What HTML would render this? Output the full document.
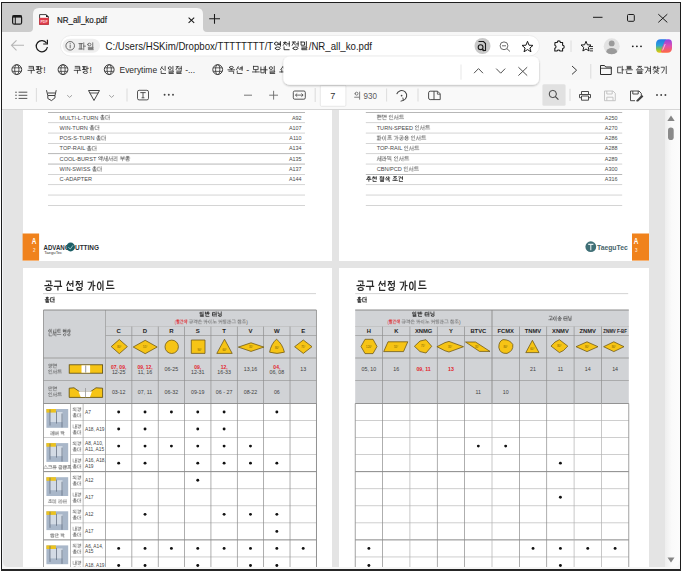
<!DOCTYPE html>
<html><head><meta charset="utf-8"><style>
html,body{margin:0;padding:0;width:684px;height:571px;overflow:hidden;background:#fff;}
svg{display:block;font-family:"Liberation Sans",sans-serif;} text{white-space:pre;}
</style></head><body>
<svg width="684" height="571" viewBox="0 0 684 571">
<rect x="0" y="0" width="684" height="571" fill="#ffffff"/><rect x="2" y="3" width="678" height="29" fill="#cccccc"/><rect x="2" y="32" width="678" height="48" fill="#f7f7f7"/><rect x="2" y="80" width="678" height="29" fill="#f9f9f9"/><rect x="2" y="109" width="678" height="1" fill="#d6d6d6"/><rect x="2" y="110" width="663" height="459" fill="#e4e4e4"/><defs><linearGradient id="sbg" x1="0" y1="0" x2="1" y2="0"><stop offset="0" stop-color="#eeeeee"/><stop offset="0.45" stop-color="#fafafa"/><stop offset="1" stop-color="#fcfcfc"/></linearGradient></defs><rect x="665" y="110" width="15" height="459" fill="url(#sbg)"/><path d="M667.3 121L671 115.4L674.7 121Z" fill="#858585"/><rect x="668" y="127.6" width="5.7" height="12.4" rx="2.8" fill="#8a8a8a"/><path d="M667.5 557.5L671 562.5L674.5 557.5Z" fill="#858585"/><path d="M29 32 Q33 32 33 28 L33 14 Q33 8 39 8 L197 8 Q203 8 203 14 L203 28 Q203 32 207 32 Z" fill="#f7f7f7"/><rect x="12.6" y="15.6" width="9" height="8.6" rx="1.8" fill="none" stroke="#1a1a1a" stroke-width="1.2"/><rect x="12.6" y="15.4" width="9" height="2.2" fill="#1a1a1a"/><rect x="14.8" y="16" width="1" height="8" fill="#1a1a1a"/><path d="M39.6 14.6H46.2L48.4 16.8V24.4H39.6Z" fill="#ffffff" stroke="#2a2a2a" stroke-width="0.9" stroke-linejoin="round"/><rect x="39.2" y="17.8" width="9.6" height="7" fill="#dd3b48"/><path d="M46 14.4V17H48.6Z" fill="#1a1a1a"/><text x="40.4" y="22.6" font-family='"Liberation Sans",sans-serif' font-size="4.2" font-weight="bold" fill="#ffd9dc" textLength="7.2" lengthAdjust="spacingAndGlyphs">PDF</text><text x="57" y="22.7" font-family='"Liberation Sans",sans-serif' font-size="8.9" fill="#1b1b1b" stroke="#1b1b1b" stroke-width="0.18" textLength="50" lengthAdjust="spacingAndGlyphs">NR_all_ko.pdf</text><path d="M188.6 17.6L194.2 22.8M194.2 17.6L188.6 22.8" stroke="#1b1b1b" stroke-width="1.05"/><path d="M214.5 14V23.7M209.2 18.8H220" stroke="#1b1b1b" stroke-width="1.05"/><path d="M593 17.3H602.5" stroke="#1b1b1b" stroke-width="1"/><rect x="627.5" y="14.5" width="6.8" height="6.8" rx="1" fill="none" stroke="#1b1b1b" stroke-width="1"/><path d="M658.3 14.2L667.3 22.4M667.3 14.2L658.3 22.4" stroke="#1b1b1b" stroke-width="1"/><path d="M11.5 45.3H24M16.5 40.3L11.5 45.3L16.5 50.3" fill="none" stroke="#b5b5b5" stroke-width="1.1"/><path d="M46.6 43.2 A5.6 5.6 0 1 0 47.4 47" fill="none" stroke="#1b1b1b" stroke-width="1.2"/><path d="M47.4 39.8V44H43.2" fill="none" stroke="#1b1b1b" stroke-width="1.2"/><rect x="60.5" y="35.5" width="479" height="20.5" rx="10.2" fill="#ffffff" stroke="#e8e8e8" stroke-width="0.8"/><rect x="62.5" y="38.8" width="37.5" height="14" rx="7" fill="#efefef"/><circle cx="70.2" cy="45.8" r="4.3" fill="none" stroke="#5c5c5c" stroke-width="0.9"/><path d="M70.2 44.6V48.2" stroke="#5c5c5c" stroke-width="0.9"/><circle cx="70.2" cy="43.2" r="0.55" fill="#5c5c5c"/><path d="M78.96 43.57L82.39 43.57M79.99 43.57L79.99 48.97M81.36 43.57L81.36 48.97M78.96 48.97L82.39 48.97M83.76 42.90L83.76 49.64M83.76 46.14L85.40 46.14M87.67 44.52a1.64 1.35 0 1 0 3.29 0a1.64 1.35 0 1 0 -3.29 0M92.74 42.90L92.74 46.67M88.35 47.35L93.15 47.35L93.15 48.49L88.35 48.49L88.35 49.64L93.15 49.64" fill="none" stroke="#5a5a5a" stroke-width="0.80" stroke-linecap="square" stroke-linejoin="miter"/><text x="105.50" y="49.50" font-size="10.20" fill="#1b1b1b" textLength="167.73" lengthAdjust="spacingAndGlyphs">C:/Users/HSKim/Dropbox/TTTTTTTT/T</text><text x="308.73" y="49.50" font-size="10.20" fill="#1b1b1b" textLength="63.27" lengthAdjust="spacingAndGlyphs">/NR_all_ko.pdf</text><path d="M274.46 43.64a1.71 1.59 0 1 0 3.43 0a1.71 1.59 0 1 0 -3.43 0M280.42 41.72L280.42 46.18M278.52 43.20L280.42 43.20M278.52 44.53L280.42 44.53M275.17 48.33a2.50 1.35 0 1 0 5.00 0a2.50 1.35 0 1 0 -5.00 0M285.05 41.88L285.05 42.43M283.51 42.74L286.59 42.74M285.05 42.74L283.33 45.23M285.05 43.80L286.76 45.23M289.29 41.72L289.29 46.18M287.40 43.87L289.29 43.87M284.05 46.98L284.05 49.69L289.04 49.69M292.38 42.04L295.46 42.04M293.92 42.04L292.21 45.23M293.92 43.32L295.63 45.23M298.17 41.72L298.17 46.18M296.27 43.87L298.17 43.87M292.92 48.33a2.50 1.35 0 1 0 5.00 0a2.50 1.35 0 1 0 -5.00 0M301.08 42.04L304.51 42.04L304.51 45.23L301.08 45.23L301.08 42.04M306.36 41.72L306.36 46.18M301.80 46.98L306.79 46.98L306.79 48.33L301.80 48.33L301.80 49.69L306.79 49.69" fill="none" stroke="#1b1b1b" stroke-width="0.85" stroke-linecap="square" stroke-linejoin="miter"/><circle cx="482.5" cy="46" r="8" fill="#c9c9c9"/><path d="M478.5 41.5h5l2 2v7h-3" fill="none" stroke="#1b1b1b" stroke-width="1.1"/><circle cx="480.6" cy="47.2" r="2.4" fill="none" stroke="#1b1b1b" stroke-width="1.1"/><path d="M482.3 49L484.3 51" stroke="#1b1b1b" stroke-width="1.1"/><circle cx="504" cy="45.8" r="3.9" fill="none" stroke="#6a6a6a" stroke-width="1"/><path d="M506.8 48.6L510 51.5M502 45.8H506" stroke="#6a6a6a" stroke-width="1"/><path d="M527.5 41.3L529 45.2L533 45.4L529.9 48L531 51.8L527.5 49.6L524 51.8L525.1 48L522 45.4L526 45.2Z" fill="none" stroke="#1b1b1b" stroke-width="1" stroke-linejoin="round"/><path d="M555 42.5h2.2a1.6 1.6 0 0 1 3.2 0h2.2v2.8a1.6 1.6 0 0 1 0 3.2v2.5h-2.6a1.6 1.6 0 0 0 -3 0h-2.2v-2.6a1.6 1.6 0 0 0 0 -3.1z" fill="none" stroke="#1b1b1b" stroke-width="1.1" stroke-linejoin="round"/><path d="M571 40.5V52" stroke="#d8d8d8" stroke-width="0.9"/><path d="M586 41.3L587.4 44.8L591 45L588.3 47.4L589.1 51L586 49L582.9 51L583.7 47.4L581 45L584.6 44.8Z" fill="none" stroke="#1b1b1b" stroke-width="1" stroke-linejoin="round"/><path d="M589 46.5H593M589.8 48.7H593M590 50.9H593" stroke="#1b1b1b" stroke-width="0.9"/><defs><clipPath id="avc"><circle cx="611.7" cy="46.3" r="8"/></clipPath></defs><circle cx="611.7" cy="46.3" r="8" fill="#e2e2e2"/><g clip-path="url(#avc)"><circle cx="611.7" cy="43.4" r="2.9" fill="#9a9a9a"/><ellipse cx="611.7" cy="52.6" rx="5.6" ry="4.6" fill="#9a9a9a"/></g><circle cx="632.8" cy="46.3" r="0.9" fill="#1b1b1b"/><circle cx="636.9" cy="46.3" r="0.9" fill="#1b1b1b"/><circle cx="641" cy="46.3" r="0.9" fill="#1b1b1b"/><defs><linearGradient id="cp1" x1="0" y1="0" x2="0" y2="1"><stop offset="0" stop-color="#2476e8"/><stop offset="0.45" stop-color="#2aa0d8"/><stop offset="0.75" stop-color="#8cc63e"/><stop offset="1" stop-color="#f2c40f"/></linearGradient><linearGradient id="cp2" x1="0" y1="0" x2="0" y2="1"><stop offset="0" stop-color="#8a43e6"/><stop offset="0.5" stop-color="#e04fb0"/><stop offset="1" stop-color="#ff6a3d"/></linearGradient></defs><path d="M660.8 39.2H665.6Q667.6 39.2 667 41L663.3 50.8Q662.5 52.8 660.4 52.8H659.6Q656 52.8 656 48.6V44Q656 39.2 660.8 39.2Z" fill="url(#cp1)"/><path d="M667.2 52.8H662.4Q660.4 52.8 661 51L664.7 41.2Q665.5 39.2 667.6 39.2H668.4Q672 39.2 672 43.4V48Q672 52.8 667.2 52.8Z" fill="url(#cp2)"/><path d="M665.2 44L662.6 50.4" stroke="#fbfbfb" stroke-width="0.8" opacity="0.8"/><circle cx="16.8" cy="69.6" r="4.9" fill="none" stroke="#3a3a3a" stroke-width="1"/><ellipse cx="16.8" cy="69.6" rx="2.1" ry="4.9" fill="none" stroke="#3a3a3a" stroke-width="0.9"/><path d="M12.3 67.8H21.3M12.3 71.4H21.3" stroke="#3a3a3a" stroke-width="0.8"/><text x="43.20" y="73.40" font-size="8.50" fill="#2a2a2a" textLength="2.40" lengthAdjust="spacingAndGlyphs">!</text><path d="M29.05 66.40L33.50 66.40L33.50 69.60M29.05 68.00L33.50 68.00M28.10 70.38L34.45 70.38M31.27 70.38L31.27 73.12M36.36 66.68L39.42 66.68M37.28 66.68L37.28 69.53M38.50 66.68L38.50 69.53M36.36 69.53L39.42 69.53M40.71 66.40L40.71 70.38M40.71 68.31L42.15 68.31M37.00 72.30a2.22 1.21 0 1 0 4.45 0a2.22 1.21 0 1 0 -4.45 0" fill="none" stroke="#2a2a2a" stroke-width="0.80" stroke-linecap="square" stroke-linejoin="miter"/><circle cx="63.0" cy="69.6" r="4.9" fill="none" stroke="#3a3a3a" stroke-width="1"/><ellipse cx="63.0" cy="69.6" rx="2.1" ry="4.9" fill="none" stroke="#3a3a3a" stroke-width="0.9"/><path d="M58.5 67.8H67.5M58.5 71.4H67.5" stroke="#3a3a3a" stroke-width="0.8"/><text x="89.40" y="73.40" font-size="8.50" fill="#2a2a2a" textLength="2.40" lengthAdjust="spacingAndGlyphs">!</text><path d="M75.25 66.40L79.70 66.40L79.70 69.60M75.25 68.00L79.70 68.00M74.30 70.38L80.65 70.38M77.47 70.38L77.47 73.12M82.56 66.68L85.62 66.68M83.48 66.68L83.48 69.53M84.70 66.68L84.70 69.53M82.56 69.53L85.62 69.53M86.91 66.40L86.91 70.38M86.91 68.31L88.35 68.31M83.20 72.30a2.22 1.21 0 1 0 4.45 0a2.22 1.21 0 1 0 -4.45 0" fill="none" stroke="#2a2a2a" stroke-width="0.80" stroke-linecap="square" stroke-linejoin="miter"/><circle cx="109.2" cy="69.6" r="4.9" fill="none" stroke="#3a3a3a" stroke-width="1"/><ellipse cx="109.2" cy="69.6" rx="2.1" ry="4.9" fill="none" stroke="#3a3a3a" stroke-width="0.9"/><path d="M104.7 67.8H113.7M104.7 71.4H113.7" stroke="#3a3a3a" stroke-width="0.8"/><text x="119.50" y="73.40" font-size="8.50" fill="#2a2a2a" textLength="39.94" lengthAdjust="spacingAndGlyphs">Everytime </text><text x="182.79" y="73.40" font-size="8.50" fill="#2a2a2a" textLength="12.21" lengthAdjust="spacingAndGlyphs"> -...</text><path d="M162.03 66.68L160.54 69.53M162.03 67.68L163.52 69.53M165.13 66.40L165.13 70.38M161.16 71.09L161.16 73.51L165.51 73.51M168.32 68.11a1.49 1.42 0 1 0 2.98 0a1.49 1.42 0 1 0 -2.98 0M172.91 66.40L172.91 70.38M168.94 71.09L173.29 71.09L173.29 72.30L168.94 72.30L168.94 73.51L173.29 73.51M176.25 66.68L178.93 66.68M177.59 66.68L176.10 69.53M177.59 67.82L179.08 69.53M181.28 66.40L181.28 70.38M179.63 68.31L181.28 68.31M176.72 71.09L181.07 71.09L181.07 72.30L176.72 72.30L176.72 73.51L181.07 73.51" fill="none" stroke="#2a2a2a" stroke-width="0.80" stroke-linecap="square" stroke-linejoin="miter"/><circle cx="217.7" cy="69.6" r="4.9" fill="none" stroke="#3a3a3a" stroke-width="1"/><ellipse cx="217.7" cy="69.6" rx="2.1" ry="4.9" fill="none" stroke="#3a3a3a" stroke-width="0.9"/><path d="M213.2 67.8H222.2M213.2 71.4H222.2" stroke="#3a3a3a" stroke-width="0.8"/><text x="243.71" y="73.40" font-size="8.50" fill="#2a2a2a" textLength="7.97" lengthAdjust="spacingAndGlyphs"> - </text><text x="276.45" y="73.40" font-size="8.50" fill="#2a2a2a" textLength="2.49" lengthAdjust="spacingAndGlyphs"> </text><path d="M229.34 67.47a1.99 1.07 0 1 0 3.98 0a1.99 1.07 0 1 0 -3.98 0M231.33 68.75L231.33 69.81M228.01 69.81L234.64 69.81M229.01 71.23L233.65 71.23L233.65 73.51M238.19 66.68L236.60 69.53M238.19 67.68L239.78 69.53M242.14 66.40L242.14 70.38M240.37 67.71L242.14 67.71M240.37 68.91L242.14 68.91M237.26 71.09L237.26 73.51L241.90 73.51M253.49 66.40L258.13 66.40L258.13 69.60L253.49 69.60L253.49 66.40M255.81 69.99L255.81 71.95M252.50 71.95L259.13 71.95M260.89 67.11L260.89 72.80L264.20 72.80L264.20 67.11M260.89 69.67L264.20 69.67M265.53 66.40L265.53 73.51M265.53 69.81L267.12 69.81M269.34 68.11a1.59 1.42 0 1 0 3.18 0a1.59 1.42 0 1 0 -3.18 0M274.25 66.40L274.25 70.38M270.00 71.09L274.64 71.09L274.64 72.30L270.00 72.30L270.00 73.51L274.64 73.51M283.07 66.40L280.75 69.60M283.07 67.52L285.39 69.60M281.75 69.99L281.75 71.95M284.40 69.99L284.40 71.95M279.76 71.95L286.39 71.95" fill="none" stroke="#2a2a2a" stroke-width="0.80" stroke-linecap="square" stroke-linejoin="miter"/><path d="M572 66L576.6 70.2L572 74.4" fill="none" stroke="#3a3a3a" stroke-width="1"/><path d="M590.8 64V78.6" stroke="#d8d8d8" stroke-width="0.9"/><path d="M600.5 65.5h4l1.2 1.5h5.6v7.5h-10.8z" fill="none" stroke="#2b2b2b" stroke-width="1"/><path d="M600.5 68.3h10.8" stroke="#2b2b2b" stroke-width="0.8"/><text x="633.14" y="73.40" font-size="8.50" fill="#2a2a2a" textLength="2.48" lengthAdjust="spacingAndGlyphs"> </text><path d="M620.94 67.11L617.64 67.11L617.64 72.80L620.94 72.80M622.26 66.40L622.26 73.51M622.26 69.81L623.84 69.81M627.05 66.40L631.01 66.40L631.01 67.47L627.05 67.47L627.05 68.53L631.01 68.53M625.73 69.81L632.33 69.81M626.72 71.23L626.72 73.51L631.34 73.51M637.95 66.40L641.51 66.40M639.73 66.40L637.75 68.53M639.73 67.25L641.71 68.53M636.43 69.81L643.03 69.81M637.42 71.23L642.04 71.23L642.04 72.37L637.42 72.37L637.42 73.51L642.04 73.51M644.78 67.22L647.92 67.22L647.59 69.96L645.61 72.80M650.46 66.40L650.46 73.51M648.61 68.75L650.46 68.75M648.61 70.88L650.46 70.88M654.79 66.54L654.79 67.03M653.36 67.31L656.21 67.31M654.79 67.31L653.20 69.53M654.79 68.25L656.37 69.53M657.71 66.40L657.71 70.38M657.71 68.31L659.21 68.31M654.09 71.09L658.25 71.09M656.17 71.09L653.86 73.51M656.17 72.06L658.48 73.51M661.22 67.22L664.36 67.22L664.03 69.96L662.05 72.80M666.24 66.40L666.24 73.51" fill="none" stroke="#2a2a2a" stroke-width="0.80" stroke-linecap="square" stroke-linejoin="miter"/><path d="M18.6 92.2H27.3M18.6 95.3H27.3M18.6 98.4H27.3" stroke="#424242" stroke-width="0.9"/><circle cx="16" cy="92.2" r="0.7" fill="#424242"/><circle cx="16" cy="95.3" r="0.7" fill="#424242"/><circle cx="16" cy="98.4" r="0.7" fill="#424242"/><path d="M36.4 88V101.8" stroke="#d4d4d4" stroke-width="0.8"/><path d="M46.5 90.2L47.8 95.5H55L56.2 90.2M47.8 95.5V98.5L51.5 100.6L55 97.8V95.5M47.8 93H55" fill="none" stroke="#424242" stroke-width="1"/><path d="M67.2 95.2L69.6 97.4L72 95.2" fill="none" stroke="#9a9a9a" stroke-width="0.9"/><path d="M88.5 90.5H99.5L94 100.5Z" fill="none" stroke="#424242" stroke-width="1" stroke-linejoin="round"/><path d="M89.8 93H98.2" stroke="#424242" stroke-width="0.9"/><path d="M109.2 95.2L111.6 97.4L114 95.2" fill="none" stroke="#9a9a9a" stroke-width="0.9"/><path d="M127 88.5V101.5" stroke="#d4d4d4" stroke-width="0.8"/><rect x="137.5" y="90.3" width="11" height="9.6" rx="1.6" fill="none" stroke="#424242" stroke-width="0.9"/><path d="M140.3 92.6H145.7M143 92.6V97.8M141.6 97.8H144.4" stroke="#424242" stroke-width="0.9"/><circle cx="164.6" cy="94.8" r="0.95" fill="#424242"/><circle cx="168.8" cy="94.8" r="0.95" fill="#424242"/><circle cx="173" cy="94.8" r="0.95" fill="#424242"/><path d="M244 95.2H252" stroke="#6a6a6a" stroke-width="0.9"/><path d="M269.2 95.2H278M273.6 90.8V99.6" stroke="#6a6a6a" stroke-width="0.9"/><rect x="293.3" y="91" width="12" height="8.2" rx="1.4" fill="none" stroke="#424242" stroke-width="0.9"/><path d="M295.5 95.1H303.1M297.2 93.5L295.5 95.1L297.2 96.7M301.4 93.5L303.1 95.1L301.4 96.7" fill="none" stroke="#424242" stroke-width="0.8"/><path d="M315.2 88V102" stroke="#d4d4d4" stroke-width="0.8"/><rect x="320.3" y="85.3" width="25.6" height="21" rx="1.2" fill="#ffffff" stroke="#e2e2e2" stroke-width="0.8"/><text x="332.8" y="99" font-family='"Liberation Sans",sans-serif' font-size="9.2" fill="#333" text-anchor="middle">7</text><text x="361.38" y="99.00" font-size="9.20" fill="#5a5a5a" textLength="15.62" lengthAdjust="spacingAndGlyphs"> 930</text><path d="M355.04 93.65a1.47 1.47 0 1 0 2.95 0a1.47 1.47 0 1 0 -2.95 0M354.74 97.22L358.87 97.22M359.61 92.17L359.61 99.18" fill="none" stroke="#5a5a5a" stroke-width="0.75" stroke-linecap="square" stroke-linejoin="miter"/><path d="M386.6 88.5V101.5" stroke="#d4d4d4" stroke-width="0.8"/><path d="M396.7 94.2A5.1 5.1 0 1 1 403.2 100.4" fill="none" stroke="#424242" stroke-width="1.05"/><path d="M400.6 101.2L403.4 100.4L402.8 97.6" fill="none" stroke="#424242" stroke-width="0.95"/><circle cx="401.6" cy="95.6" r="0.85" fill="#424242"/><path d="M418 88.5V101.5" stroke="#d4d4d4" stroke-width="0.8"/><path d="M434 91.2H430.2Q428.6 91.2 428.6 92.8V98Q428.6 99.6 430.2 99.6H434Z M434 91.2H437.6L440.2 93.8V99.6H434" fill="none" stroke="#424242" stroke-width="0.95" stroke-linejoin="round"/><path d="M437.4 91.4V94.2H440" fill="none" stroke="#424242" stroke-width="0.8"/><rect x="542.4" y="84.3" width="23.2" height="21.4" rx="1.5" fill="#e1e1e1"/><circle cx="552.8" cy="94" r="3.6" fill="none" stroke="#424242" stroke-width="1"/><path d="M555.4 96.6L558.4 99.6" stroke="#424242" stroke-width="1.1"/><path d="M570 88.8V101" stroke="#d4d4d4" stroke-width="0.8"/><path d="M581.5 94.5V91.5H588.5V94.5M579.5 97.7V94.5H590.5V97.7H588.5M581.5 97.7H579.5M581.5 96V100.2H588.5V96Z" fill="none" stroke="#424242" stroke-width="0.95"/><path d="M604.5 91h8.5l2.3 2.3v7.4h-10.8z M606.8 91v3h5.4v-3 M606.8 100.7v-3.5h6.2v3.5" fill="none" stroke="#c2c2c2" stroke-width="0.95"/><path d="M630.5 91h8.5l2.3 2.3v2.4 M630.5 91v9.7h4.5 M632.8 91v3h5.4v-3" fill="none" stroke="#424242" stroke-width="0.95"/><path d="M636.5 100.2L641.8 94.8L643.4 96.4L638.1 101.6H636.5Z" fill="#424242"/><circle cx="657" cy="95" r="0.95" fill="#424242"/><circle cx="661.2" cy="95" r="0.95" fill="#424242"/><circle cx="665.4" cy="95" r="0.95" fill="#424242"/><g clip-path="url(#pdfclip)"><defs><clipPath id="pdfclip"><rect x="2" y="110" width="663" height="459"/></clipPath></defs><rect x="23" y="110" width="309" height="151" fill="#fff"/><rect x="339" y="110" width="310" height="151" fill="#fff"/><rect x="23" y="268" width="309" height="301" fill="#fff"/><rect x="339" y="268" width="310" height="301" fill="#fff"/><rect x="48" y="112.05" width="257" height="0.7" fill="#999999"/><rect x="365.8" y="112.05" width="256.4" height="0.7" fill="#999999"/><rect x="48" y="122.38" width="257" height="0.7" fill="#c2c2c2"/><rect x="365.8" y="122.38" width="256.4" height="0.7" fill="#c2c2c2"/><rect x="48" y="132.71" width="257" height="0.7" fill="#c2c2c2"/><rect x="365.8" y="132.71" width="256.4" height="0.7" fill="#c2c2c2"/><rect x="48" y="143.04" width="257" height="0.7" fill="#c2c2c2"/><rect x="365.8" y="143.04" width="256.4" height="0.7" fill="#c2c2c2"/><rect x="48" y="153.37" width="257" height="0.7" fill="#999999"/><rect x="365.8" y="153.37" width="256.4" height="0.7" fill="#c2c2c2"/><rect x="48" y="163.70" width="257" height="0.7" fill="#999999"/><rect x="365.8" y="163.70" width="256.4" height="0.7" fill="#c2c2c2"/><rect x="48" y="174.03" width="257" height="0.7" fill="#c2c2c2"/><rect x="365.8" y="174.03" width="256.4" height="0.7" fill="#999999"/><rect x="48" y="184.36" width="257" height="0.7" fill="#c2c2c2"/><rect x="365.8" y="184.36" width="256.4" height="0.7" fill="#c2c2c2"/><rect x="48" y="194.69" width="257" height="0.7" fill="#c2c2c2"/><rect x="365.8" y="194.69" width="256.4" height="0.7" fill="#c2c2c2"/><rect x="48" y="205.02" width="257" height="0.7" fill="#c2c2c2"/><rect x="365.8" y="205.02" width="256.4" height="0.7" fill="#c2c2c2"/><text x="59.60" y="119.50" font-size="5.60" fill="#4a4a4a" textLength="40.34" lengthAdjust="spacingAndGlyphs">MULTI-L-TURN </text><path d="M102.51 115.06L102.51 115.29M101.38 115.46L103.64 115.46M101.71 116.04a0.80 0.43 0 1 0 1.61 0a0.80 0.43 0 1 0 -1.61 0M102.51 116.61L102.51 117.28M100.42 117.28L104.61 117.28M101.05 118.18L103.98 118.18L103.98 118.89L101.05 118.89L101.05 119.61L103.98 119.61M107.75 115.57L105.66 115.57L105.66 119.16L107.75 119.16M109.26 115.12L109.26 119.61M108.08 117.28L109.26 117.28" fill="none" stroke="#4a4a4a" stroke-width="0.45" stroke-linecap="square" stroke-linejoin="miter"/><text x="301.5" y="119.50" font-family='"Liberation Sans",sans-serif' font-size="5.4" fill="#4a4a4a" text-anchor="end">A92</text><text x="59.60" y="129.83" font-size="5.60" fill="#4a4a4a" textLength="29.86" lengthAdjust="spacingAndGlyphs">WIN-TURN </text><path d="M92.04 125.39L92.04 125.62M90.91 125.79L93.17 125.79M91.23 126.37a0.80 0.43 0 1 0 1.61 0a0.80 0.43 0 1 0 -1.61 0M92.04 126.94L92.04 127.61M89.94 127.61L94.13 127.61M90.57 128.51L93.50 128.51L93.50 129.22L90.57 129.22L90.57 129.94L93.50 129.94M97.27 125.90L95.18 125.90L95.18 129.49L97.27 129.49M98.78 125.46L98.78 129.94M97.61 127.61L98.78 127.61" fill="none" stroke="#4a4a4a" stroke-width="0.45" stroke-linecap="square" stroke-linejoin="miter"/><text x="301.5" y="129.83" font-family='"Liberation Sans",sans-serif' font-size="5.4" fill="#4a4a4a" text-anchor="end">A107</text><text x="59.60" y="140.16" font-size="5.60" fill="#4a4a4a" textLength="36.40" lengthAdjust="spacingAndGlyphs">POS-S-TURN </text><path d="M98.58 135.72L98.58 135.95M97.45 136.12L99.71 136.12M97.77 136.70a0.80 0.43 0 1 0 1.61 0a0.80 0.43 0 1 0 -1.61 0M98.58 137.27L98.58 137.94M96.48 137.94L100.67 137.94M97.11 138.84L100.04 138.84L100.04 139.55L97.11 139.55L97.11 140.27L100.04 140.27M103.81 136.23L101.72 136.23L101.72 139.82L103.81 139.82M105.32 135.78L105.32 140.27M104.15 137.94L105.32 137.94" fill="none" stroke="#4a4a4a" stroke-width="0.45" stroke-linecap="square" stroke-linejoin="miter"/><text x="301.5" y="140.16" font-family='"Liberation Sans",sans-serif' font-size="5.4" fill="#4a4a4a" text-anchor="end">A110</text><text x="59.60" y="150.49" font-size="5.60" fill="#4a4a4a" textLength="27.07" lengthAdjust="spacingAndGlyphs">TOP-RAIL </text><path d="M89.25 146.05L89.25 146.28M88.12 146.45L90.38 146.45M88.45 147.03a0.80 0.43 0 1 0 1.61 0a0.80 0.43 0 1 0 -1.61 0M89.25 147.60L89.25 148.27M87.16 148.27L91.34 148.27M87.78 149.17L90.71 149.17L90.71 149.88L87.78 149.88L87.78 150.60L90.71 150.60M94.48 146.56L92.39 146.56L92.39 150.15L94.48 150.15M95.99 146.12L95.99 150.60M94.82 148.27L95.99 148.27" fill="none" stroke="#4a4a4a" stroke-width="0.45" stroke-linecap="square" stroke-linejoin="miter"/><text x="301.5" y="150.49" font-family='"Liberation Sans",sans-serif' font-size="5.4" fill="#4a4a4a" text-anchor="end">A134</text><text x="59.60" y="160.82" font-size="5.60" fill="#4a4a4a" textLength="38.17" lengthAdjust="spacingAndGlyphs">COOL-BURST </text><text x="118.38" y="160.82" font-size="5.60" fill="#4a4a4a" textLength="1.56" lengthAdjust="spacingAndGlyphs"> </text><path d="M98.46 157.52a1.00 0.90 0 1 0 2.01 0a1.00 0.90 0 1 0 -2.01 0M101.24 156.44L101.24 158.96M102.20 156.44L102.20 158.96M101.24 157.65L102.20 157.65M98.88 159.41L101.81 159.41L101.81 160.93M104.53 156.89L103.49 160.48M104.53 158.15L105.58 160.48M106.59 156.44L106.59 160.93M107.42 156.44L107.42 160.93M105.83 158.60L106.59 158.60M109.69 156.89L108.64 160.48M109.69 158.15L110.73 160.48M112.24 156.44L112.24 160.93M111.07 158.60L112.24 158.60M113.79 156.89L115.89 156.89L115.89 158.69L113.79 158.69L113.79 160.48L115.89 160.48M116.97 156.44L116.97 160.93M121.04 156.44L121.04 158.46L123.97 158.46L123.97 156.44M121.04 157.35L123.97 157.35M120.42 158.96L124.60 158.96M122.51 158.96L122.51 160.68M126.41 156.44L128.92 156.44M127.16 156.44L127.16 157.79M128.16 156.44L128.16 157.79M126.41 157.79L128.92 157.79M125.57 158.06L129.75 158.06M127.66 158.06L127.66 159.00M126.20 159.50L129.13 159.50L129.13 160.93L126.20 160.93L126.20 159.50" fill="none" stroke="#4a4a4a" stroke-width="0.45" stroke-linecap="square" stroke-linejoin="miter"/><text x="301.5" y="160.82" font-family='"Liberation Sans",sans-serif' font-size="5.4" fill="#4a4a4a" text-anchor="end">A135</text><text x="59.60" y="171.15" font-size="5.60" fill="#4a4a4a" textLength="32.35" lengthAdjust="spacingAndGlyphs">WIN-SWISS </text><path d="M94.53 166.71L94.53 166.94M93.40 167.11L95.66 167.11M93.73 167.69a0.80 0.43 0 1 0 1.61 0a0.80 0.43 0 1 0 -1.61 0M94.53 168.26L94.53 168.93M92.44 168.93L96.62 168.93M93.06 169.83L95.99 169.83L95.99 170.54L93.06 170.54L93.06 171.26L95.99 171.26M99.76 167.22L97.67 167.22L97.67 170.81L99.76 170.81M101.27 166.78L101.27 171.26M100.10 168.93L101.27 168.93" fill="none" stroke="#4a4a4a" stroke-width="0.45" stroke-linecap="square" stroke-linejoin="miter"/><text x="301.5" y="171.15" font-family='"Liberation Sans",sans-serif' font-size="5.4" fill="#4a4a4a" text-anchor="end">A137</text><text x="59.60" y="181.48" font-size="5.60" fill="#4a4a4a" textLength="32.36" lengthAdjust="spacingAndGlyphs">C-ADAPTER</text><text x="301.5" y="181.48" font-family='"Liberation Sans",sans-serif' font-size="5.4" fill="#4a4a4a" text-anchor="end">A144</text><text x="387.00" y="119.50" font-size="5.60" fill="#4a4a4a" textLength="1.56" lengthAdjust="spacingAndGlyphs"> </text><path d="M377.39 115.30L379.40 115.30M377.99 115.30L377.99 117.10M378.80 115.30L378.80 117.10M377.39 117.10L379.40 117.10M380.89 115.12L380.89 117.64M379.77 115.95L380.89 115.95M379.77 116.71L380.89 116.71M377.81 118.09L377.81 119.61L380.74 119.61M382.54 115.30L384.55 115.30L384.55 117.10L382.54 117.10L382.54 115.30M386.04 115.12L386.04 117.64M384.93 115.95L386.04 115.95M384.93 116.71L386.04 116.71M382.96 118.09L382.96 119.61L385.89 119.61M389.25 116.20a1.00 0.90 0 1 0 2.01 0a1.00 0.90 0 1 0 -2.01 0M392.35 115.12L392.35 117.64M389.67 118.09L389.67 119.61L392.60 119.61M395.32 115.57L394.28 119.16M395.32 116.83L396.37 119.16M397.88 115.12L397.88 119.61M396.71 117.28L397.88 117.28M402.91 115.12L399.97 115.12L399.97 117.14L402.91 117.14M399.97 116.13L402.91 116.13M399.35 118.62L403.53 118.62" fill="none" stroke="#4a4a4a" stroke-width="0.45" stroke-linecap="square" stroke-linejoin="miter"/><text x="617.4" y="119.50" font-family='"Liberation Sans",sans-serif' font-size="5.4" fill="#4a4a4a" text-anchor="end">A250</text><text x="376.70" y="129.83" font-size="5.60" fill="#4a4a4a" textLength="37.96" lengthAdjust="spacingAndGlyphs">TURN-SPEED </text><path d="M415.35 126.53a1.00 0.90 0 1 0 2.01 0a1.00 0.90 0 1 0 -2.01 0M418.45 125.46L418.45 127.97M415.77 128.42L415.77 129.94L418.70 129.94M421.42 125.90L420.38 129.49M421.42 127.16L422.47 129.49M423.98 125.46L423.98 129.94M422.81 127.61L423.98 127.61M429.00 125.46L426.07 125.46L426.07 127.47L429.00 127.47M426.07 126.46L429.00 126.46M425.45 128.95L429.63 128.95" fill="none" stroke="#4a4a4a" stroke-width="0.45" stroke-linecap="square" stroke-linejoin="miter"/><text x="617.4" y="129.83" font-family='"Liberation Sans",sans-serif' font-size="5.4" fill="#4a4a4a" text-anchor="end">A270</text><text x="392.16" y="140.16" font-size="5.60" fill="#4a4a4a" textLength="1.56" lengthAdjust="spacingAndGlyphs"> </text><text x="409.17" y="140.16" font-size="5.60" fill="#4a4a4a" textLength="1.56" lengthAdjust="spacingAndGlyphs"> </text><path d="M377.27 136.23L379.36 136.23M377.89 136.23L377.89 139.82M378.73 136.23L378.73 139.82M377.27 139.82L379.36 139.82M380.20 135.78L380.20 140.27M380.20 137.94L381.20 137.94M382.42 138.03a1.05 1.79 0 1 0 2.09 0a1.05 1.79 0 1 0 -2.09 0M385.60 135.78L385.60 140.27M388.11 135.78L391.05 135.78M388.99 135.78L388.99 137.80M390.17 135.78L390.17 137.80M388.11 137.80L391.05 137.80M387.49 139.28L391.67 139.28M394.28 136.31L396.27 136.31L396.06 138.03L394.80 139.82M397.21 135.78L397.21 140.27M397.21 137.94L398.21 137.94M400.18 135.78L402.70 135.78L402.70 137.13M401.44 137.27L401.44 137.94M399.35 137.94L403.53 137.94M399.97 139.55a1.47 0.72 0 1 0 2.93 0a1.47 0.72 0 1 0 -2.93 0M405.34 136.46a1.26 0.67 0 1 0 2.51 0a1.26 0.67 0 1 0 -2.51 0M405.75 137.27L405.75 137.94M407.43 137.27L407.43 137.94M404.50 137.94L408.69 137.94M405.13 139.55a1.47 0.72 0 1 0 2.93 0a1.47 0.72 0 1 0 -2.93 0M411.42 136.86a1.00 0.90 0 1 0 2.01 0a1.00 0.90 0 1 0 -2.01 0M414.51 135.78L414.51 138.30M411.83 138.75L411.83 140.27L414.77 140.27M417.49 136.23L416.44 139.82M417.49 137.49L418.54 139.82M420.04 135.78L420.04 140.27M418.87 137.94L420.04 137.94M425.07 135.78L422.14 135.78L422.14 137.80L425.07 137.80M422.14 136.79L425.07 136.79M421.51 139.28L425.70 139.28" fill="none" stroke="#4a4a4a" stroke-width="0.45" stroke-linecap="square" stroke-linejoin="miter"/><text x="617.4" y="140.16" font-family='"Liberation Sans",sans-serif' font-size="5.4" fill="#4a4a4a" text-anchor="end">A286</text><text x="376.70" y="150.49" font-size="5.60" fill="#4a4a4a" textLength="27.07" lengthAdjust="spacingAndGlyphs">TOP-RAIL </text><path d="M404.47 147.19a1.00 0.90 0 1 0 2.01 0a1.00 0.90 0 1 0 -2.01 0M407.56 146.12L407.56 148.63M404.88 149.08L404.88 150.60L407.81 150.60M410.54 146.56L409.49 150.15M410.54 147.82L411.58 150.15M413.09 146.12L413.09 150.60M411.92 148.27L413.09 148.27M418.12 146.12L415.19 146.12L415.19 148.13L418.12 148.13M415.19 147.12L418.12 147.12M414.56 149.61L418.75 149.61" fill="none" stroke="#4a4a4a" stroke-width="0.45" stroke-linecap="square" stroke-linejoin="miter"/><text x="617.4" y="150.49" font-family='"Liberation Sans",sans-serif' font-size="5.4" fill="#4a4a4a" text-anchor="end">A288</text><text x="392.16" y="160.82" font-size="5.60" fill="#4a4a4a" textLength="1.56" lengthAdjust="spacingAndGlyphs"> </text><path d="M378.31 156.89L377.27 160.48M378.31 158.15L379.36 160.48M380.36 156.44L380.36 160.93M381.20 156.44L381.20 160.93M379.61 158.60L380.36 158.60M382.42 156.89L384.51 156.89L384.51 158.69L382.42 158.69L382.42 160.48L384.51 160.48M385.35 156.44L385.35 160.93M385.35 158.60L386.35 158.60M387.70 156.62L389.71 156.62L389.71 158.42L387.70 158.42L387.70 156.62M390.79 156.44L390.79 158.96M388.11 159.41L391.05 159.41L391.05 160.93M394.40 157.52a1.00 0.90 0 1 0 2.01 0a1.00 0.90 0 1 0 -2.01 0M397.50 156.44L397.50 158.96M394.82 159.41L394.82 160.93L397.75 160.93M400.48 156.89L399.43 160.48M400.48 158.15L401.52 160.48M403.03 156.44L403.03 160.93M401.86 158.60L403.03 158.60M408.06 156.44L405.13 156.44L405.13 158.46L408.06 158.46M405.13 157.45L408.06 157.45M404.50 159.94L408.69 159.94" fill="none" stroke="#4a4a4a" stroke-width="0.45" stroke-linecap="square" stroke-linejoin="miter"/><text x="617.4" y="160.82" font-family='"Liberation Sans",sans-serif' font-size="5.4" fill="#4a4a4a" text-anchor="end">A289</text><text x="376.70" y="171.15" font-size="5.60" fill="#4a4a4a" textLength="26.76" lengthAdjust="spacingAndGlyphs">CBN/PCD </text><path d="M404.15 167.85a1.00 0.90 0 1 0 2.01 0a1.00 0.90 0 1 0 -2.01 0M407.25 166.78L407.25 169.29M404.57 169.74L404.57 171.26L407.50 171.26M410.22 167.22L409.18 170.81M410.22 168.48L411.27 170.81M412.78 166.78L412.78 171.26M411.61 168.93L412.78 168.93M417.80 166.78L414.87 166.78L414.87 168.79L417.80 168.79M414.87 167.78L417.80 167.78M414.25 170.27L418.43 170.27" fill="none" stroke="#4a4a4a" stroke-width="0.45" stroke-linecap="square" stroke-linejoin="miter"/><text x="617.4" y="171.15" font-family='"Liberation Sans",sans-serif' font-size="5.4" fill="#4a4a4a" text-anchor="end">A300</text><text x="377.41" y="181.48" font-size="6.20" font-weight="bold" fill="#2a2a2a" textLength="1.72" lengthAdjust="spacingAndGlyphs"> </text><text x="390.54" y="181.48" font-size="6.20" font-weight="bold" fill="#2a2a2a" textLength="1.72" lengthAdjust="spacingAndGlyphs"> </text><path d="M368.85 176.57L368.85 176.94M367.49 177.15L370.22 177.15M368.85 177.15L367.34 178.83M368.85 177.86L370.37 178.83M366.69 179.35L371.02 179.35M368.85 179.35L368.85 181.19M373.65 176.78L373.65 177.10M372.71 177.29L374.58 177.29M373.65 177.29L372.61 178.78M373.65 177.92L374.69 178.78M376.22 176.68L376.22 179.35M375.07 177.96L376.22 177.96M373.04 179.83L373.04 181.45L376.07 181.45M380.14 176.87L382.01 176.87M381.07 176.87L380.03 178.78M381.07 177.63L382.11 178.78M383.65 176.68L383.65 179.35M382.50 177.96L383.65 177.96M380.47 179.83L383.50 179.83L383.50 180.64L380.47 180.64L380.47 181.45L383.50 181.45M386.78 176.87L385.74 178.78M386.78 177.54L387.82 178.78M388.70 176.68L388.70 179.35M388.70 177.96L389.68 177.96M386.17 179.83L389.20 179.83L389.20 181.45M393.75 176.68L396.48 176.68M395.11 176.68L393.60 178.83M395.11 177.54L396.63 178.83M395.11 179.09L395.11 180.40M392.95 180.40L397.28 180.40M398.87 176.91L400.84 176.91L400.64 177.83L399.39 178.78M402.49 176.68L402.49 179.35M401.33 177.96L402.49 177.96M399.30 179.83L399.30 181.45L402.33 181.45" fill="none" stroke="#2a2a2a" stroke-width="0.80" stroke-linecap="square" stroke-linejoin="miter"/><text x="617.4" y="181.48" font-family='"Liberation Sans",sans-serif' font-size="5.4" fill="#4a4a4a" text-anchor="end">A316</text><rect x="22.6" y="233.5" width="16.5" height="27.1" fill="#f0821c"/><text x="34" y="243.6" font-family='"Liberation Sans",sans-serif' font-size="9" font-weight="bold" fill="#fff" text-anchor="middle" textLength="4.6" lengthAdjust="spacingAndGlyphs">A</text><text x="34.2" y="251.6" font-family='"Liberation Sans",sans-serif' font-size="4.6" font-weight="bold" fill="#fbd9b5" text-anchor="middle">2</text><text x="43.5" y="250" font-family='"Liberation Sans",sans-serif' font-size="8" font-weight="bold" fill="#2a2e33" textLength="25.6" lengthAdjust="spacingAndGlyphs">ADVANC</text><circle cx="70.6" cy="247" r="4.4" fill="#1b5e66"/><path d="M68.4 247.4L70.3 249L73 245.3" fill="none" stroke="#cfe8ea" stroke-width="0.7"/><text x="75" y="250" font-family='"Liberation Sans",sans-serif' font-size="8" font-weight="bold" fill="#2a2e33" textLength="24" lengthAdjust="spacingAndGlyphs">UTTING</text><text x="44.2" y="253.8" font-family='"Liberation Sans",sans-serif' font-size="3.8" fill="#333" textLength="18" lengthAdjust="spacingAndGlyphs">TaeguTec</text><rect x="632" y="233.5" width="17" height="27.1" fill="#f0821c"/><text x="636" y="243.6" font-family='"Liberation Sans",sans-serif' font-size="9" font-weight="bold" fill="#fff" text-anchor="middle" textLength="4.6" lengthAdjust="spacingAndGlyphs">A</text><text x="636.2" y="251.6" font-family='"Liberation Sans",sans-serif' font-size="4.6" font-weight="bold" fill="#fbd9b5" text-anchor="middle">3</text><circle cx="590.8" cy="246.7" r="5.4" fill="#3f6f76"/><path d="M588.2 244.4H593.4M590.8 244.4V250.2" stroke="#e6f0f1" stroke-width="1.1"/><text x="597" y="249.6" font-family='"Liberation Sans",sans-serif' font-size="7.6" font-weight="bold" fill="#48656b" textLength="30.7" lengthAdjust="spacingAndGlyphs">TaeguTec</text><text x="62.57" y="290.40" font-size="10.60" font-weight="bold" fill="#2a2a2a" textLength="2.82" lengthAdjust="spacingAndGlyphs"> </text><text x="84.07" y="290.40" font-size="10.60" font-weight="bold" fill="#2a2a2a" textLength="2.82" lengthAdjust="spacingAndGlyphs"> </text><path d="M46.41 281.20L50.73 281.20L50.73 283.97M48.57 284.25L48.57 285.63M44.97 285.63L52.17 285.63M46.05 288.96a2.52 1.48 0 1 0 5.04 0a2.52 1.48 0 1 0 -5.04 0M55.38 281.20L60.43 281.20L60.43 285.36M54.30 286.37L61.51 286.37M57.91 286.37L57.91 289.93M68.55 281.57L66.82 285.26M68.55 282.86L70.28 285.26M72.84 281.20L72.84 286.37M70.92 283.68L72.84 283.68M67.54 287.30L67.54 290.44L72.58 290.44M76.33 281.57L79.44 281.57M77.89 281.57L76.16 285.26M77.89 283.05L79.62 285.26M82.17 281.20L82.17 286.37M80.26 283.68L82.17 283.68M76.88 288.87a2.52 1.57 0 1 0 5.04 0a2.52 1.57 0 1 0 -5.04 0M88.10 282.27L91.52 282.27L91.16 285.82L89.00 289.51M93.14 281.20L93.14 290.44M93.14 285.63L94.87 285.63M97.44 285.82a1.80 3.69 0 1 0 3.60 0a1.80 3.69 0 1 0 -3.60 0M102.91 281.20L102.91 290.44M112.75 281.20L107.71 281.20L107.71 285.36L112.75 285.36M106.63 288.40L113.83 288.40" fill="none" stroke="#2a2a2a" stroke-width="1.20" stroke-linecap="square" stroke-linejoin="miter"/><path d="M47.23 297.15L47.23 297.41M46.18 297.61L48.27 297.61M46.48 298.27a0.74 0.49 0 1 0 1.49 0a0.74 0.49 0 1 0 -1.49 0M47.23 298.92L47.23 299.68M45.29 299.68L49.16 299.68M45.87 300.71L48.58 300.71L48.58 301.53L45.87 301.53L45.87 302.35L48.58 302.35M52.55 297.74L50.62 297.74L50.62 301.83L52.55 301.83M53.95 297.22L53.95 302.35M52.86 299.68L53.95 299.68" fill="none" stroke="#2a2a2a" stroke-width="0.85" stroke-linecap="square" stroke-linejoin="miter"/><text x="374.67" y="290.40" font-size="10.60" font-weight="bold" fill="#2a2a2a" textLength="2.82" lengthAdjust="spacingAndGlyphs"> </text><text x="396.17" y="290.40" font-size="10.60" font-weight="bold" fill="#2a2a2a" textLength="2.82" lengthAdjust="spacingAndGlyphs"> </text><path d="M358.51 281.20L362.83 281.20L362.83 283.97M360.67 284.25L360.67 285.63M357.07 285.63L364.27 285.63M358.15 288.96a2.52 1.48 0 1 0 5.04 0a2.52 1.48 0 1 0 -5.04 0M367.48 281.20L372.53 281.20L372.53 285.36M366.40 286.37L373.61 286.37M370.01 286.37L370.01 289.93M380.65 281.57L378.92 285.26M380.65 282.86L382.38 285.26M384.94 281.20L384.94 286.37M383.02 283.68L384.94 283.68M379.64 287.30L379.64 290.44L384.68 290.44M388.43 281.57L391.54 281.57M389.99 281.57L388.26 285.26M389.99 283.05L391.72 285.26M394.27 281.20L394.27 286.37M392.36 283.68L394.27 283.68M388.98 288.87a2.52 1.57 0 1 0 5.04 0a2.52 1.57 0 1 0 -5.04 0M400.20 282.27L403.62 282.27L403.26 285.82L401.10 289.51M405.24 281.20L405.24 290.44M405.24 285.63L406.97 285.63M409.54 285.82a1.80 3.69 0 1 0 3.60 0a1.80 3.69 0 1 0 -3.60 0M415.01 281.20L415.01 290.44M424.85 281.20L419.81 281.20L419.81 285.36L424.85 285.36M418.73 288.40L425.93 288.40" fill="none" stroke="#2a2a2a" stroke-width="1.20" stroke-linecap="square" stroke-linejoin="miter"/><path d="M359.32 297.15L359.32 297.41M358.28 297.61L360.37 297.61M358.58 298.27a0.74 0.49 0 1 0 1.49 0a0.74 0.49 0 1 0 -1.49 0M359.32 298.92L359.32 299.68M357.39 299.68L361.26 299.68M357.97 300.71L360.68 300.71L360.68 301.53L357.97 301.53L357.97 302.35L360.68 302.35M364.65 297.74L362.71 297.74L362.71 301.83L364.65 301.83M366.05 297.22L366.05 302.35M364.96 299.68L366.05 299.68" fill="none" stroke="#2a2a2a" stroke-width="0.85" stroke-linecap="square" stroke-linejoin="miter"/><rect x="43" y="293.2" width="273" height="0.9" fill="#cfcfcf"/><rect x="355.2" y="293.2" width="273" height="0.9" fill="#cfcfcf"/><rect x="43.50" y="310.00" width="272.88" height="93.50" fill="#d1d3d6"/><rect x="105.50" y="326.25" width="210.88" height="0.70" fill="#bdbdbd"/><rect x="105.50" y="335.05" width="210.88" height="0.70" fill="#9a9a9a"/><rect x="43.50" y="357.55" width="272.88" height="0.90" fill="#9a9a9a"/><rect x="43.50" y="380.15" width="272.88" height="0.70" fill="#9a9a9a"/><rect x="43.50" y="403.05" width="272.88" height="0.90" fill="#8a8a8a"/><rect x="131.51" y="326.60" width="0.70" height="76.90" fill="#8f8f8f"/><rect x="157.87" y="326.60" width="0.70" height="76.90" fill="#8f8f8f"/><rect x="184.23" y="326.60" width="0.70" height="76.90" fill="#8f8f8f"/><rect x="210.59" y="326.60" width="0.70" height="76.90" fill="#8f8f8f"/><rect x="236.95" y="326.60" width="0.70" height="76.90" fill="#8f8f8f"/><rect x="263.31" y="326.60" width="0.70" height="76.90" fill="#8f8f8f"/><rect x="289.67" y="326.60" width="0.70" height="76.90" fill="#8f8f8f"/><rect x="105.15" y="310.00" width="0.70" height="93.50" fill="#9a9a9a"/><text x="210.11" y="316.40" font-size="6.00" font-weight="bold" fill="#2a2a2a" textLength="1.67" lengthAdjust="spacingAndGlyphs"> </text><path d="M199.93 313.03a1.01 0.88 0 1 0 2.02 0a1.01 0.88 0 1 0 -2.02 0M203.05 311.97L203.05 314.44M200.35 314.89L203.30 314.89L203.30 315.64L200.35 315.64L200.35 316.38L203.30 316.38M205.45 312.15L205.45 313.92L207.47 313.92L207.47 312.15M205.45 312.95L207.47 312.95M208.33 311.97L208.33 314.44M208.33 313.16L209.29 313.16M205.87 314.89L205.87 316.38L208.82 316.38M214.62 312.42L212.51 312.42L212.51 315.94L214.62 315.94M212.51 314.18L214.62 314.18M216.14 311.97L216.14 316.38M214.96 314.09L216.14 314.09M218.16 312.15L218.16 313.92L220.18 313.92M221.28 311.97L221.28 314.44M218.58 315.64a1.48 0.75 0 1 0 2.95 0a1.48 0.75 0 1 0 -2.95 0" fill="none" stroke="#2a2a2a" stroke-width="0.75" stroke-linecap="square" stroke-linejoin="miter"/><text x="174.84" y="323.60" font-size="5.00" fill="#e2262d" textLength="1.35" lengthAdjust="spacingAndGlyphs">(</text><path d="M176.74 319.98L176.74 321.52L177.37 321.52L177.37 319.98M176.74 320.67L177.37 320.67M177.51 319.98L177.51 321.52L178.13 321.52L178.13 319.98M177.51 320.67L178.13 320.67M178.72 319.83L178.72 321.98M178.72 320.86L179.38 320.86M177.03 322.37L179.06 322.37L179.06 323.02L177.03 323.02L177.03 323.68L179.06 323.68M180.46 320.01L181.78 320.01L181.64 320.75L180.81 321.52M182.44 319.83L182.44 321.98M182.44 320.86L183.10 320.86M180.75 322.37L180.75 323.68L182.78 323.68M184.87 319.98L184.18 321.52M184.87 320.52L185.57 321.52M186.10 319.83L186.10 321.98M186.76 319.83L186.76 321.98M186.10 320.86L186.76 320.86M184.47 322.37L186.49 322.37L186.49 323.68" fill="none" stroke="#e2262d" stroke-width="0.45" stroke-linecap="square" stroke-linejoin="miter"/><text x="202.18" y="323.60" font-size="5.00" fill="#666" textLength="1.34" lengthAdjust="spacingAndGlyphs"> </text><text x="216.86" y="323.60" font-size="5.00" fill="#666" textLength="1.34" lengthAdjust="spacingAndGlyphs"> </text><text x="235.99" y="323.60" font-size="5.00" fill="#666" textLength="1.34" lengthAdjust="spacingAndGlyphs"> </text><text x="246.23" y="323.60" font-size="5.00" fill="#666" textLength="1.61" lengthAdjust="spacingAndGlyphs">)</text><path d="M189.80 319.80L192.32 319.80L192.32 321.56M189.26 321.98L192.86 321.98M190.34 321.98L190.34 323.49M191.78 321.98L191.78 323.49M193.89 319.99L195.53 319.99L195.36 320.74L194.32 321.52M196.90 319.80L196.90 321.98M195.94 320.52L196.90 320.52M195.94 321.18L196.90 321.18M194.25 322.37L196.77 322.37L196.77 323.70M198.88 320.38a1.08 0.58 0 1 0 2.16 0a1.08 0.58 0 1 0 -2.16 0M198.16 321.67L201.76 321.67M198.70 322.45L198.70 323.70L201.22 323.70M204.02 320.25L205.73 320.25L205.55 321.75L204.47 323.31M204.11 321.59L205.55 321.59M206.54 319.80L206.54 323.70M206.54 321.67L207.40 321.67M208.46 321.75a0.90 1.56 0 1 0 1.80 0a0.90 1.56 0 1 0 -1.80 0M211.20 319.80L211.20 323.70M213.38 319.80L213.38 321.56L215.90 321.56M214.64 321.77L214.64 322.84M212.84 322.84L216.44 322.84M218.70 320.25L220.41 320.25L220.23 321.75L219.15 323.31M218.79 321.59L220.23 321.59M221.80 319.80L221.80 323.70M220.79 321.67L221.80 321.67M224.98 319.96L223.26 319.96L223.26 321.52L224.98 321.52M223.26 320.74L224.98 320.74M225.92 319.80L225.92 321.98M223.62 323.04a1.26 0.66 0 1 0 2.52 0a1.26 0.66 0 1 0 -2.52 0M227.59 320.19L229.40 320.19L229.40 321.75L227.59 321.75L227.59 323.31L229.40 323.31M230.12 319.80L230.12 323.70M230.12 321.67L230.98 321.67M232.51 319.80L235.03 319.80L235.03 321.56M231.97 322.84L235.57 322.84M238.80 319.88L238.80 320.14M238.03 320.30L239.58 320.30M238.80 320.30L237.94 321.52M238.80 320.81L239.67 321.52M240.40 319.80L240.40 321.98M240.40 320.85L241.22 320.85M238.30 322.37L240.82 322.37L240.82 323.70L238.30 323.70L238.30 322.37M242.87 319.80L245.14 319.80M244.01 319.80L242.75 321.56M244.01 320.50L245.27 321.56M244.01 321.77L244.01 322.84M242.21 322.84L245.81 322.84" fill="none" stroke="#666" stroke-width="0.40" stroke-linecap="square" stroke-linejoin="miter"/><text x="61.11" y="335.80" font-size="6.00" fill="#4a4a4a" textLength="1.31" lengthAdjust="spacingAndGlyphs"> </text><path d="M48.76 330.86a0.81 1.32 0 1 0 1.61 0a0.81 1.32 0 1 0 -1.61 0M51.24 329.27L51.24 332.98M49.10 333.64L49.10 335.88L51.44 335.88M53.84 329.94L53.00 335.22M53.84 331.79L54.67 335.22M55.88 329.27L55.88 335.88M54.94 332.45L55.88 332.45M60.12 329.27L57.77 329.27L57.77 332.25L60.12 332.25M57.77 330.76L60.12 330.76M57.27 334.43L60.62 334.43M63.89 329.41L63.89 329.86M63.16 330.20L64.61 330.20M63.37 331.34a0.52 0.85 0 1 0 1.03 0a0.52 0.85 0 1 0 -1.03 0M65.88 329.27L65.88 332.98M64.99 330.50L65.88 330.50M64.99 331.61L65.88 331.61M63.42 334.76a1.17 1.12 0 1 0 2.35 0a1.17 1.12 0 1 0 -2.35 0M68.23 329.54L67.42 332.18M68.23 330.46L69.03 332.18M69.71 329.27L69.71 332.98M69.71 331.05L70.48 331.05M67.76 334.76a1.17 1.12 0 1 0 2.35 0a1.17 1.12 0 1 0 -2.35 0" fill="none" stroke="#4a4a4a" stroke-width="0.55" stroke-linecap="square" stroke-linejoin="miter"/><text x="118.68" y="333.40" font-family='"Liberation Sans",sans-serif' font-size="6.00" font-weight="bold" fill="#1e1e1e" text-anchor="middle">C</text><text x="145.04" y="333.40" font-family='"Liberation Sans",sans-serif' font-size="6.00" font-weight="bold" fill="#1e1e1e" text-anchor="middle">D</text><text x="171.40" y="333.40" font-family='"Liberation Sans",sans-serif' font-size="6.00" font-weight="bold" fill="#1e1e1e" text-anchor="middle">R</text><text x="197.76" y="333.40" font-family='"Liberation Sans",sans-serif' font-size="6.00" font-weight="bold" fill="#1e1e1e" text-anchor="middle">S</text><text x="224.12" y="333.40" font-family='"Liberation Sans",sans-serif' font-size="6.00" font-weight="bold" fill="#1e1e1e" text-anchor="middle">T</text><text x="250.48" y="333.40" font-family='"Liberation Sans",sans-serif' font-size="6.00" font-weight="bold" fill="#1e1e1e" text-anchor="middle">V</text><text x="276.84" y="333.40" font-family='"Liberation Sans",sans-serif' font-size="6.00" font-weight="bold" fill="#1e1e1e" text-anchor="middle">W</text><text x="303.20" y="333.40" font-family='"Liberation Sans",sans-serif' font-size="6.00" font-weight="bold" fill="#1e1e1e" text-anchor="middle">E</text><path d="M111.2 346.6L119.3 339.5L127.4 346.6L119.3 353.7Z" fill="#f6c415" stroke="#6b5410" stroke-width="0.75" stroke-linejoin="round"/><path d="M133.2 347.0L145.2 340.3L157.2 347.0L145.2 353.7Z" fill="#f6c415" stroke="#6b5410" stroke-width="0.75" stroke-linejoin="round"/><circle cx="171.7" cy="346.8" r="6.7" fill="#f6c415" stroke="#6b5410" stroke-width="0.75"/><path d="M191.3 340.0L205.0 340.0L205.0 353.4L191.3 353.4Z" fill="#f6c415" stroke="#6b5410" stroke-width="0.75" stroke-linejoin="round"/><path d="M224.5 339.2L232.2 353.4L216.8 353.4Z" fill="#f6c415" stroke="#6b5410" stroke-width="0.75" stroke-linejoin="round"/><path d="M238.3 347.1L251.0 342.8L263.9 347.1L251.0 351.4Z" fill="#f6c415" stroke="#6b5410" stroke-width="0.75" stroke-linejoin="round"/><path d="M276.5 339.2Q282.5 344 284.4 352.2Q277 354.6 269.6 352.2Q271 344 276.5 339.2Z" fill="#f6c415" stroke="#6b5410" stroke-width="0.75"/><path d="M294.6 346.7L303.3 340.0L312.0 346.7L303.3 353.4Z" fill="#f6c415" stroke="#6b5410" stroke-width="0.75" stroke-linejoin="round"/><text x="119.3" y="347.6" font-family='"Liberation Sans",sans-serif' font-size="2.8" fill="#6e5500" text-anchor="middle">80°</text><text x="145.2" y="348.0" font-family='"Liberation Sans",sans-serif' font-size="2.8" fill="#6e5500" text-anchor="middle">55°</text><text x="199.5" y="350.5" font-family='"Liberation Sans",sans-serif' font-size="2.8" fill="#6e5500" text-anchor="middle">90°</text><text x="224.5" y="350.6" font-family='"Liberation Sans",sans-serif' font-size="2.8" fill="#6e5500" text-anchor="middle">60°</text><text x="251.0" y="348.1" font-family='"Liberation Sans",sans-serif' font-size="2.8" fill="#6e5500" text-anchor="middle">35°</text><text x="277.0" y="349.0" font-family='"Liberation Sans",sans-serif' font-size="2.8" fill="#6e5500" text-anchor="middle">80°</text><text x="303.3" y="347.7" font-family='"Liberation Sans",sans-serif' font-size="2.8" fill="#6e5500" text-anchor="middle">75°</text><text x="118.68" y="368.60" font-family='"Liberation Sans",sans-serif' font-size="5.00" font-weight="bold" fill="#e2262d" text-anchor="middle">07, 09,</text><text x="118.68" y="374.00" font-family='"Liberation Sans",sans-serif' font-size="5.30" fill="#3f3f3f" text-anchor="middle">12-25</text><text x="145.04" y="368.60" font-family='"Liberation Sans",sans-serif' font-size="5.00" font-weight="bold" fill="#e2262d" text-anchor="middle">09, 12,</text><text x="145.04" y="374.00" font-family='"Liberation Sans",sans-serif' font-size="5.30" fill="#3f3f3f" text-anchor="middle">11, 16</text><text x="171.40" y="371.20" font-family='"Liberation Sans",sans-serif' font-size="5.30" fill="#3f3f3f" text-anchor="middle">06-25</text><text x="197.76" y="368.60" font-family='"Liberation Sans",sans-serif' font-size="5.00" font-weight="bold" fill="#e2262d" text-anchor="middle">09,</text><text x="197.76" y="374.00" font-family='"Liberation Sans",sans-serif' font-size="5.30" fill="#3f3f3f" text-anchor="middle">12-31</text><text x="224.12" y="368.60" font-family='"Liberation Sans",sans-serif' font-size="5.00" font-weight="bold" fill="#e2262d" text-anchor="middle">12,</text><text x="224.12" y="374.00" font-family='"Liberation Sans",sans-serif' font-size="5.30" fill="#3f3f3f" text-anchor="middle">16-33</text><text x="250.48" y="371.20" font-family='"Liberation Sans",sans-serif' font-size="5.30" fill="#3f3f3f" text-anchor="middle">13,16</text><text x="276.84" y="368.60" font-family='"Liberation Sans",sans-serif' font-size="5.00" font-weight="bold" fill="#e2262d" text-anchor="middle">04,</text><text x="276.84" y="374.00" font-family='"Liberation Sans",sans-serif' font-size="5.30" fill="#3f3f3f" text-anchor="middle">06, 08</text><text x="303.20" y="371.20" font-family='"Liberation Sans",sans-serif' font-size="5.30" fill="#3f3f3f" text-anchor="middle">13</text><text x="118.68" y="394.20" font-family='"Liberation Sans",sans-serif' font-size="5.30" fill="#3f3f3f" text-anchor="middle">03-12</text><text x="145.04" y="394.20" font-family='"Liberation Sans",sans-serif' font-size="5.30" fill="#3f3f3f" text-anchor="middle">07, 11</text><text x="171.40" y="394.20" font-family='"Liberation Sans",sans-serif' font-size="5.30" fill="#3f3f3f" text-anchor="middle">06-32</text><text x="197.76" y="394.20" font-family='"Liberation Sans",sans-serif' font-size="5.30" fill="#3f3f3f" text-anchor="middle">09-19</text><text x="224.12" y="394.20" font-family='"Liberation Sans",sans-serif' font-size="5.30" fill="#3f3f3f" text-anchor="middle">06 - 27</text><text x="250.48" y="394.20" font-family='"Liberation Sans",sans-serif' font-size="5.30" fill="#3f3f3f" text-anchor="middle">08-22</text><text x="276.84" y="394.20" font-family='"Liberation Sans",sans-serif' font-size="5.30" fill="#3f3f3f" text-anchor="middle">06</text><path d="M48.63 364.94a0.89 0.78 0 1 0 1.79 0a0.89 0.78 0 1 0 -1.79 0M51.17 364.01L51.17 366.18M51.17 364.73L52.01 364.73M51.17 365.38L52.01 365.38M49.00 367.23a1.30 0.66 0 1 0 2.60 0a1.30 0.66 0 1 0 -2.60 0M53.23 364.17L55.01 364.17L55.01 365.72L53.23 365.72L53.23 364.17M56.33 364.01L56.33 366.18M55.34 364.73L56.33 364.73M55.34 365.38L56.33 365.38M53.60 366.57L53.60 367.89L56.20 367.89" fill="none" stroke="#555" stroke-width="0.42" stroke-linecap="square" stroke-linejoin="miter"/><path d="M48.63 370.74a0.89 0.78 0 1 0 1.79 0a0.89 0.78 0 1 0 -1.79 0M51.38 369.81L51.38 371.98M49.00 372.37L49.00 373.69L51.60 373.69M54.04 370.20L53.11 373.30M54.04 371.28L54.97 373.30M56.31 369.81L56.31 373.69M55.27 371.67L56.31 371.67M60.80 369.81L58.20 369.81L58.20 371.56L60.80 371.56M58.20 370.68L60.80 370.68M57.64 372.84L61.36 372.84" fill="none" stroke="#555" stroke-width="0.42" stroke-linecap="square" stroke-linejoin="miter"/><path d="M50.41 386.97L48.63 386.97L48.63 388.52L50.41 388.52M51.17 386.81L51.17 388.98M51.17 387.85L52.01 387.85M49.00 389.37L49.00 390.69L51.60 390.69M53.23 386.97L55.01 386.97L55.01 388.52L53.23 388.52L53.23 386.97M56.33 386.81L56.33 388.98M55.34 387.53L56.33 387.53M55.34 388.18L56.33 388.18M53.60 389.37L53.60 390.69L56.20 390.69" fill="none" stroke="#555" stroke-width="0.42" stroke-linecap="square" stroke-linejoin="miter"/><path d="M48.63 393.54a0.89 0.78 0 1 0 1.79 0a0.89 0.78 0 1 0 -1.79 0M51.38 392.61L51.38 394.78M49.00 395.17L49.00 396.49L51.60 396.49M54.04 393.00L53.11 396.10M54.04 394.08L54.97 396.10M56.31 392.61L56.31 396.49M55.27 394.47L56.31 394.47M60.80 392.61L58.20 392.61L58.20 394.36L60.80 394.36M58.20 393.48L60.80 393.48M57.64 395.64L61.36 395.64" fill="none" stroke="#555" stroke-width="0.42" stroke-linecap="square" stroke-linejoin="miter"/><rect x="69.2" y="364.8" width="33.4" height="8.4" fill="#f6c415" stroke="#5a4a10" stroke-width="0.8"/><rect x="81.5" y="365.3" width="8.6" height="7.4" fill="#fff"/><rect x="85.2" y="365.3" width="1" height="7.4" fill="#999"/><path d="M69.2 388.2L74 387.8L80 392L90 392L96 387.8L102.6 388.2V397.4H69.2Z" fill="#f6c415" stroke="#5a4a10" stroke-width="0.8"/><path d="M78.6 391.6L92 391.6L90 397H80.6Z" fill="#fff"/><rect x="85.2" y="388" width="0.8" height="9.4" fill="#999"/><rect x="43.50" y="309.55" width="272.88" height="0.90" fill="#808080"/><rect x="70.40" y="420.20" width="245.98" height="0.70" fill="#b9b9b9"/><rect x="43.50" y="437.25" width="272.88" height="0.70" fill="#b9b9b9"/><rect x="70.40" y="454.30" width="245.98" height="0.70" fill="#b9b9b9"/><rect x="43.50" y="471.30" width="272.88" height="0.80" fill="#6a6a6a"/><rect x="70.40" y="488.40" width="245.98" height="0.70" fill="#b9b9b9"/><rect x="43.50" y="505.45" width="272.88" height="0.70" fill="#b9b9b9"/><rect x="70.40" y="522.50" width="245.98" height="0.70" fill="#b9b9b9"/><rect x="43.50" y="539.50" width="272.88" height="0.80" fill="#6a6a6a"/><rect x="70.40" y="556.60" width="245.98" height="0.70" fill="#b9b9b9"/><rect x="43.50" y="573.65" width="272.88" height="0.70" fill="#b9b9b9"/><rect x="70.05" y="403.50" width="0.70" height="167.50" fill="#a0a0a0"/><rect x="82.75" y="403.50" width="0.70" height="167.50" fill="#a0a0a0"/><rect x="105.15" y="403.50" width="0.70" height="167.50" fill="#8c8c8c"/><rect x="131.51" y="403.50" width="0.70" height="167.50" fill="#8c8c8c"/><rect x="157.87" y="403.50" width="0.70" height="167.50" fill="#8c8c8c"/><rect x="184.23" y="403.50" width="0.70" height="167.50" fill="#8c8c8c"/><rect x="210.59" y="403.50" width="0.70" height="167.50" fill="#8c8c8c"/><rect x="236.95" y="403.50" width="0.70" height="167.50" fill="#8c8c8c"/><rect x="263.31" y="403.50" width="0.70" height="167.50" fill="#8c8c8c"/><rect x="289.67" y="403.50" width="0.70" height="167.50" fill="#8c8c8c"/><rect x="316.03" y="403.50" width="0.70" height="167.50" fill="#8c8c8c"/><rect x="43.10" y="310.00" width="0.80" height="261.00" fill="#8c8c8c"/><rect x="315.98" y="310.00" width="0.80" height="261.00" fill="#8c8c8c"/><path d="M73.20 408.40a0.89 0.77 0 1 0 1.79 0a0.89 0.77 0 1 0 -1.79 0M74.27 409.36L74.27 410.28M73.02 410.28L75.52 410.28M75.97 407.62L75.97 411.31M77.62 407.80L79.25 407.80L79.07 408.51L78.04 409.25M80.60 407.62L80.60 409.69M79.65 408.31L80.60 408.31M79.65 408.93L80.60 408.93M77.97 410.69a1.25 0.63 0 1 0 2.50 0a1.25 0.63 0 1 0 -2.50 0" fill="none" stroke="#555" stroke-width="0.40" stroke-linecap="square" stroke-linejoin="miter"/><path d="M74.81 413.37L74.81 413.56M73.84 413.70L75.77 413.70M74.12 414.18a0.69 0.35 0 1 0 1.37 0a0.69 0.35 0 1 0 -1.37 0M74.81 414.64L74.81 415.20M73.02 415.20L76.60 415.20M73.56 415.93L76.06 415.93L76.06 416.52L73.56 416.52L73.56 417.11L76.06 417.11M79.30 413.79L77.51 413.79L77.51 416.74L79.30 416.74M80.58 413.42L80.58 417.11M79.58 415.20L80.58 415.20" fill="none" stroke="#555" stroke-width="0.40" stroke-linecap="square" stroke-linejoin="miter"/><text x="85" y="413.82" font-family='"Liberation Sans",sans-serif' font-size="4.8" fill="#444">A7</text><path d="M73.09 425.04L73.09 427.99L74.88 427.99M75.52 424.67L75.52 428.36M76.38 424.67L76.38 428.36M75.52 426.45L76.38 426.45M77.62 424.85L79.25 424.85L79.07 425.56L78.04 426.30M80.60 424.67L80.60 426.74M79.65 425.36L80.60 425.36M79.65 425.98L80.60 425.98M77.97 427.74a1.25 0.63 0 1 0 2.50 0a1.25 0.63 0 1 0 -2.50 0" fill="none" stroke="#555" stroke-width="0.40" stroke-linecap="square" stroke-linejoin="miter"/><path d="M74.81 430.42L74.81 430.61M73.84 430.75L75.77 430.75M74.12 431.23a0.69 0.35 0 1 0 1.37 0a0.69 0.35 0 1 0 -1.37 0M74.81 431.69L74.81 432.25M73.02 432.25L76.60 432.25M73.56 432.98L76.06 432.98L76.06 433.57L73.56 433.57L73.56 434.16L76.06 434.16M79.30 430.84L77.51 430.84L77.51 433.79L79.30 433.79M80.58 430.47L80.58 434.16M79.58 432.25L80.58 432.25" fill="none" stroke="#555" stroke-width="0.40" stroke-linecap="square" stroke-linejoin="miter"/><text x="85" y="430.88" font-family='"Liberation Sans",sans-serif' font-size="4.8" fill="#444">A18, A19</text><path d="M73.20 442.50a0.89 0.77 0 1 0 1.79 0a0.89 0.77 0 1 0 -1.79 0M74.27 443.46L74.27 444.38M73.02 444.38L75.52 444.38M75.97 441.72L75.97 445.41M77.62 441.90L79.25 441.90L79.07 442.61L78.04 443.35M80.60 441.72L80.60 443.79M79.65 442.41L80.60 442.41M79.65 443.03L80.60 443.03M77.97 444.79a1.25 0.63 0 1 0 2.50 0a1.25 0.63 0 1 0 -2.50 0" fill="none" stroke="#555" stroke-width="0.40" stroke-linecap="square" stroke-linejoin="miter"/><path d="M74.81 447.47L74.81 447.66M73.84 447.80L75.77 447.80M74.12 448.28a0.69 0.35 0 1 0 1.37 0a0.69 0.35 0 1 0 -1.37 0M74.81 448.74L74.81 449.30M73.02 449.30L76.60 449.30M73.56 450.03L76.06 450.03L76.06 450.62L73.56 450.62L73.56 451.21L76.06 451.21M79.30 447.89L77.51 447.89L77.51 450.84L79.30 450.84M80.58 447.52L80.58 451.21M79.58 449.30L80.58 449.30" fill="none" stroke="#555" stroke-width="0.40" stroke-linecap="square" stroke-linejoin="miter"/><text x="85" y="445.32" font-family='"Liberation Sans",sans-serif' font-size="4.8" fill="#444">A8, A10,</text><text x="85" y="451.12" font-family='"Liberation Sans",sans-serif' font-size="4.8" fill="#444">A11, A15</text><path d="M73.09 459.14L73.09 462.09L74.88 462.09M75.52 458.77L75.52 462.46M76.38 458.77L76.38 462.46M75.52 460.55L76.38 460.55M77.62 458.95L79.25 458.95L79.07 459.66L78.04 460.40M80.60 458.77L80.60 460.84M79.65 459.46L80.60 459.46M79.65 460.08L80.60 460.08M77.97 461.84a1.25 0.63 0 1 0 2.50 0a1.25 0.63 0 1 0 -2.50 0" fill="none" stroke="#555" stroke-width="0.40" stroke-linecap="square" stroke-linejoin="miter"/><path d="M74.81 464.52L74.81 464.71M73.84 464.85L75.77 464.85M74.12 465.33a0.69 0.35 0 1 0 1.37 0a0.69 0.35 0 1 0 -1.37 0M74.81 465.79L74.81 466.35M73.02 466.35L76.60 466.35M73.56 467.08L76.06 467.08L76.06 467.67L73.56 467.67L73.56 468.26L76.06 468.26M79.30 464.94L77.51 464.94L77.51 467.89L79.30 467.89M80.58 464.57L80.58 468.26M79.58 466.35L80.58 466.35" fill="none" stroke="#555" stroke-width="0.40" stroke-linecap="square" stroke-linejoin="miter"/><text x="85" y="462.37" font-family='"Liberation Sans",sans-serif' font-size="4.8" fill="#444">A16, A18,</text><text x="85" y="468.17" font-family='"Liberation Sans",sans-serif' font-size="4.8" fill="#444">A19</text><path d="M73.20 476.60a0.89 0.77 0 1 0 1.79 0a0.89 0.77 0 1 0 -1.79 0M74.27 477.56L74.27 478.48M73.02 478.48L75.52 478.48M75.97 475.82L75.97 479.51M77.62 476.00L79.25 476.00L79.07 476.71L78.04 477.45M80.60 475.82L80.60 477.89M79.65 476.51L80.60 476.51M79.65 477.13L80.60 477.13M77.97 478.89a1.25 0.63 0 1 0 2.50 0a1.25 0.63 0 1 0 -2.50 0" fill="none" stroke="#555" stroke-width="0.40" stroke-linecap="square" stroke-linejoin="miter"/><path d="M74.81 481.57L74.81 481.76M73.84 481.90L75.77 481.90M74.12 482.38a0.69 0.35 0 1 0 1.37 0a0.69 0.35 0 1 0 -1.37 0M74.81 482.84L74.81 483.40M73.02 483.40L76.60 483.40M73.56 484.13L76.06 484.13L76.06 484.72L73.56 484.72L73.56 485.31L76.06 485.31M79.30 481.99L77.51 481.99L77.51 484.94L79.30 484.94M80.58 481.62L80.58 485.31M79.58 483.40L80.58 483.40" fill="none" stroke="#555" stroke-width="0.40" stroke-linecap="square" stroke-linejoin="miter"/><text x="85" y="482.02" font-family='"Liberation Sans",sans-serif' font-size="4.8" fill="#444">A12</text><path d="M73.09 493.24L73.09 496.19L74.88 496.19M75.52 492.87L75.52 496.56M76.38 492.87L76.38 496.56M75.52 494.65L76.38 494.65M77.62 493.05L79.25 493.05L79.07 493.76L78.04 494.50M80.60 492.87L80.60 494.94M79.65 493.56L80.60 493.56M79.65 494.18L80.60 494.18M77.97 495.94a1.25 0.63 0 1 0 2.50 0a1.25 0.63 0 1 0 -2.50 0" fill="none" stroke="#555" stroke-width="0.40" stroke-linecap="square" stroke-linejoin="miter"/><path d="M74.81 498.62L74.81 498.81M73.84 498.95L75.77 498.95M74.12 499.43a0.69 0.35 0 1 0 1.37 0a0.69 0.35 0 1 0 -1.37 0M74.81 499.89L74.81 500.45M73.02 500.45L76.60 500.45M73.56 501.18L76.06 501.18L76.06 501.77L73.56 501.77L73.56 502.36L76.06 502.36M79.30 499.04L77.51 499.04L77.51 501.99L79.30 501.99M80.58 498.67L80.58 502.36M79.58 500.45L80.58 500.45" fill="none" stroke="#555" stroke-width="0.40" stroke-linecap="square" stroke-linejoin="miter"/><text x="85" y="499.07" font-family='"Liberation Sans",sans-serif' font-size="4.8" fill="#444">A17</text><path d="M73.20 510.70a0.89 0.77 0 1 0 1.79 0a0.89 0.77 0 1 0 -1.79 0M74.27 511.66L74.27 512.58M73.02 512.58L75.52 512.58M75.97 509.93L75.97 513.61M77.62 510.10L79.25 510.10L79.07 510.81L78.04 511.55M80.60 509.93L80.60 511.99M79.65 510.61L80.60 510.61M79.65 511.23L80.60 511.23M77.97 512.99a1.25 0.63 0 1 0 2.50 0a1.25 0.63 0 1 0 -2.50 0" fill="none" stroke="#555" stroke-width="0.40" stroke-linecap="square" stroke-linejoin="miter"/><path d="M74.81 515.67L74.81 515.86M73.84 516.00L75.77 516.00M74.12 516.48a0.69 0.35 0 1 0 1.37 0a0.69 0.35 0 1 0 -1.37 0M74.81 516.94L74.81 517.50M73.02 517.50L76.60 517.50M73.56 518.23L76.06 518.23L76.06 518.82L73.56 518.82L73.56 519.41L76.06 519.41M79.30 516.09L77.51 516.09L77.51 519.04L79.30 519.04M80.58 515.73L80.58 519.41M79.58 517.50L80.58 517.50" fill="none" stroke="#555" stroke-width="0.40" stroke-linecap="square" stroke-linejoin="miter"/><text x="85" y="516.12" font-family='"Liberation Sans",sans-serif' font-size="4.8" fill="#444">A12</text><path d="M73.09 527.34L73.09 530.29L74.88 530.29M75.52 526.98L75.52 530.66M76.38 526.98L76.38 530.66M75.52 528.75L76.38 528.75M77.62 527.15L79.25 527.15L79.07 527.86L78.04 528.60M80.60 526.98L80.60 529.04M79.65 527.66L80.60 527.66M79.65 528.28L80.60 528.28M77.97 530.04a1.25 0.63 0 1 0 2.50 0a1.25 0.63 0 1 0 -2.50 0" fill="none" stroke="#555" stroke-width="0.40" stroke-linecap="square" stroke-linejoin="miter"/><path d="M74.81 532.72L74.81 532.91M73.84 533.05L75.77 533.05M74.12 533.53a0.69 0.35 0 1 0 1.37 0a0.69 0.35 0 1 0 -1.37 0M74.81 533.99L74.81 534.55M73.02 534.55L76.60 534.55M73.56 535.28L76.06 535.28L76.06 535.87L73.56 535.87L73.56 536.46L76.06 536.46M79.30 533.14L77.51 533.14L77.51 536.09L79.30 536.09M80.58 532.78L80.58 536.46M79.58 534.55L80.58 534.55" fill="none" stroke="#555" stroke-width="0.40" stroke-linecap="square" stroke-linejoin="miter"/><text x="85" y="533.17" font-family='"Liberation Sans",sans-serif' font-size="4.8" fill="#444">A17</text><path d="M73.20 544.80a0.89 0.77 0 1 0 1.79 0a0.89 0.77 0 1 0 -1.79 0M74.27 545.76L74.27 546.68M73.02 546.68L75.52 546.68M75.97 544.03L75.97 547.71M77.62 544.20L79.25 544.20L79.07 544.91L78.04 545.65M80.60 544.03L80.60 546.09M79.65 544.71L80.60 544.71M79.65 545.33L80.60 545.33M77.97 547.09a1.25 0.63 0 1 0 2.50 0a1.25 0.63 0 1 0 -2.50 0" fill="none" stroke="#555" stroke-width="0.40" stroke-linecap="square" stroke-linejoin="miter"/><path d="M74.81 549.77L74.81 549.96M73.84 550.10L75.77 550.10M74.12 550.58a0.69 0.35 0 1 0 1.37 0a0.69 0.35 0 1 0 -1.37 0M74.81 551.04L74.81 551.60M73.02 551.60L76.60 551.60M73.56 552.33L76.06 552.33L76.06 552.92L73.56 552.92L73.56 553.51L76.06 553.51M79.30 550.19L77.51 550.19L77.51 553.14L79.30 553.14M80.58 549.83L80.58 553.51M79.58 551.60L80.58 551.60" fill="none" stroke="#555" stroke-width="0.40" stroke-linecap="square" stroke-linejoin="miter"/><text x="85" y="547.62" font-family='"Liberation Sans",sans-serif' font-size="4.8" fill="#444">A6, A14,</text><text x="85" y="553.42" font-family='"Liberation Sans",sans-serif' font-size="4.8" fill="#444">A15</text><path d="M73.09 561.44L73.09 564.39L74.88 564.39M75.52 561.08L75.52 564.76M76.38 561.08L76.38 564.76M75.52 562.85L76.38 562.85M77.62 561.25L79.25 561.25L79.07 561.96L78.04 562.70M80.60 561.08L80.60 563.14M79.65 561.76L80.60 561.76M79.65 562.38L80.60 562.38M77.97 564.14a1.25 0.63 0 1 0 2.50 0a1.25 0.63 0 1 0 -2.50 0" fill="none" stroke="#555" stroke-width="0.40" stroke-linecap="square" stroke-linejoin="miter"/><path d="M74.81 566.82L74.81 567.01M73.84 567.15L75.77 567.15M74.12 567.63a0.69 0.35 0 1 0 1.37 0a0.69 0.35 0 1 0 -1.37 0M74.81 568.09L74.81 568.65M73.02 568.65L76.60 568.65M73.56 569.38L76.06 569.38L76.06 569.97L73.56 569.97L73.56 570.56L76.06 570.56M79.30 567.24L77.51 567.24L77.51 570.19L79.30 570.19M80.58 566.88L80.58 570.56M79.58 568.65L80.58 568.65" fill="none" stroke="#555" stroke-width="0.40" stroke-linecap="square" stroke-linejoin="miter"/><text x="85" y="567.27" font-family='"Liberation Sans",sans-serif' font-size="4.8" fill="#444">A18, A19</text><rect x="46.4" y="409.0" width="21.8" height="18.8" fill="#a9b7c9"/><rect x="50" y="412.0" width="12.5" height="10" fill="#d3dbe5"/><rect x="46.4" y="409.0" width="9.5" height="3.6" fill="#ecc21e"/><path d="M50 409.5V425.5M56.5 411.5V423.5M62 413.5V427.5" stroke="#5a6577" stroke-width="0.7"/><text x="59.04" y="435.00" font-size="4.80" fill="#555" textLength="1.33" lengthAdjust="spacingAndGlyphs"> </text><path d="M50.70 431.77L52.49 431.77L52.49 433.24L50.70 433.24L50.70 434.72L52.49 434.72M53.35 431.40L53.35 435.09M54.06 431.40L54.06 435.09M52.70 433.17L53.35 433.17M55.12 431.77L55.12 434.72L56.90 434.72L56.90 431.77M55.12 433.10L56.90 433.10M58.19 431.40L58.19 435.09M57.19 433.17L58.19 433.17M60.97 431.55L62.69 431.55L62.69 432.29L60.97 432.29L60.97 433.02L62.69 433.02M63.42 431.40L63.42 433.47M63.42 432.39L64.23 432.39M61.33 433.83L63.83 433.83L63.83 435.09" fill="none" stroke="#555" stroke-width="0.40" stroke-linecap="square" stroke-linejoin="miter"/><rect x="46.4" y="443.1" width="21.8" height="18.8" fill="#a9b7c9"/><rect x="50" y="446.1" width="12.5" height="10" fill="#d3dbe5"/><rect x="46.4" y="443.1" width="9.5" height="3.6" fill="#ecc21e"/><path d="M50 443.6V459.6M56.5 445.6V457.6M62 447.6V461.6" stroke="#5a6577" stroke-width="0.7"/><text x="56.83" y="469.10" font-size="4.80" fill="#555" textLength="1.33" lengthAdjust="spacingAndGlyphs"> </text><path d="M45.79 465.50L44.54 467.16M45.79 466.08L47.04 467.16M44.01 468.38L47.58 468.38M48.96 465.50L51.46 465.50L51.46 467.16M48.96 466.33L51.46 466.33M48.42 468.38L52.00 468.38M53.37 465.50L55.88 465.50L55.88 466.33L53.37 466.33L53.37 467.16L55.88 467.16M52.84 467.57L56.41 467.57M53.91 467.57L53.91 468.99M55.34 467.57L55.34 468.99M59.30 465.50L61.45 465.50L61.45 466.61M59.30 466.05L61.45 466.05M58.59 467.27L62.16 467.27M59.12 468.01L61.63 468.01L61.63 468.60L59.12 468.60L59.12 469.19L61.63 469.19M63.18 465.65L64.90 465.65L64.90 466.39L63.18 466.39L63.18 467.12L64.90 467.12M65.56 465.50L65.56 467.57M66.37 465.50L66.37 467.57M65.56 466.49L66.37 466.49M63.54 467.93L66.04 467.93L66.04 469.19L63.54 469.19L63.54 467.93M67.96 465.50L70.46 465.50M68.71 465.50L68.71 467.16M69.71 465.50L69.71 467.16M67.96 467.16L70.46 467.16M67.42 468.38L70.99 468.38" fill="none" stroke="#555" stroke-width="0.40" stroke-linecap="square" stroke-linejoin="miter"/><rect x="46.4" y="477.2" width="21.8" height="18.8" fill="#a9b7c9"/><rect x="50" y="480.2" width="12.5" height="10" fill="#d3dbe5"/><rect x="46.4" y="477.2" width="9.5" height="3.6" fill="#ecc21e"/><path d="M50 477.7V493.7M56.5 479.7V491.7M62 481.7V495.7" stroke="#5a6577" stroke-width="0.7"/><text x="56.83" y="503.20" font-size="4.80" fill="#555" textLength="1.33" lengthAdjust="spacingAndGlyphs"> </text><path d="M50.21 499.52L50.21 499.80M49.08 499.97L51.34 499.97M50.21 499.97L48.96 501.26M50.21 500.51L51.46 501.26M50.21 501.46L50.21 502.48M48.42 502.48L52.00 502.48M52.91 499.97L54.70 499.97L54.70 502.92L52.91 502.92L52.91 499.97M55.63 499.60L55.63 503.29M58.66 499.97L60.45 499.97L60.45 501.44L58.66 501.44L58.66 502.92L60.45 502.92M61.38 499.60L61.38 503.29M64.86 499.97L63.08 499.97L63.08 502.92L64.86 502.92M63.08 501.44L64.86 501.44M66.15 499.60L66.15 503.29M65.15 501.37L66.15 501.37" fill="none" stroke="#555" stroke-width="0.40" stroke-linecap="square" stroke-linejoin="miter"/><rect x="46.4" y="511.3" width="21.8" height="18.8" fill="#a9b7c9"/><rect x="50" y="514.3" width="12.5" height="10" fill="#d3dbe5"/><rect x="46.4" y="511.3" width="9.5" height="3.6" fill="#ecc21e"/><path d="M50 511.8V527.8M56.5 513.8V525.8M62 515.8V529.8" stroke="#5a6577" stroke-width="0.7"/><text x="59.04" y="537.30" font-size="4.80" fill="#555" textLength="1.33" lengthAdjust="spacingAndGlyphs"> </text><path d="M52.52 533.85L50.81 533.85L50.81 535.32L52.52 535.32M50.81 534.59L52.52 534.59M53.25 533.70L53.25 535.77M53.25 534.69L54.07 534.69M51.17 536.13L51.17 537.39L53.67 537.39L53.67 536.13M51.17 536.70L53.67 536.70M56.94 533.85L55.22 533.85L55.22 535.32L56.94 535.32M57.67 533.70L57.67 535.77M57.67 534.69L58.48 534.69M55.58 536.13L55.58 537.39L58.08 537.39M60.97 533.85L62.69 533.85L62.69 534.59L60.97 534.59L60.97 535.32L62.69 535.32M63.42 533.70L63.42 535.77M63.42 534.69L64.23 534.69M61.33 536.13L63.83 536.13L63.83 537.39" fill="none" stroke="#555" stroke-width="0.40" stroke-linecap="square" stroke-linejoin="miter"/><rect x="46.4" y="545.4" width="21.8" height="18.8" fill="#a9b7c9"/><rect x="50" y="548.4" width="12.5" height="10" fill="#d3dbe5"/><rect x="46.4" y="545.4" width="9.5" height="3.6" fill="#ecc21e"/><path d="M50 545.9V561.9M56.5 547.9V559.9M62 549.9V563.9" stroke="#5a6577" stroke-width="0.7"/><circle cx="118.68" cy="412.02" r="1.45" fill="#111"/><circle cx="145.04" cy="412.02" r="1.45" fill="#111"/><circle cx="171.40" cy="412.02" r="1.45" fill="#111"/><circle cx="197.76" cy="412.02" r="1.45" fill="#111"/><circle cx="224.12" cy="412.02" r="1.45" fill="#111"/><circle cx="276.84" cy="412.02" r="1.45" fill="#111"/><circle cx="118.68" cy="429.07" r="1.45" fill="#111"/><circle cx="145.04" cy="429.07" r="1.45" fill="#111"/><circle cx="197.76" cy="429.07" r="1.45" fill="#111"/><circle cx="224.12" cy="429.07" r="1.45" fill="#111"/><circle cx="118.68" cy="446.12" r="1.45" fill="#111"/><circle cx="145.04" cy="446.12" r="1.45" fill="#111"/><circle cx="171.40" cy="446.12" r="1.45" fill="#111"/><circle cx="197.76" cy="446.12" r="1.45" fill="#111"/><circle cx="224.12" cy="446.12" r="1.45" fill="#111"/><circle cx="250.48" cy="446.12" r="1.45" fill="#111"/><circle cx="118.68" cy="463.17" r="1.45" fill="#111"/><circle cx="145.04" cy="463.17" r="1.45" fill="#111"/><circle cx="197.76" cy="463.17" r="1.45" fill="#111"/><circle cx="224.12" cy="463.17" r="1.45" fill="#111"/><circle cx="250.48" cy="463.17" r="1.45" fill="#111"/><circle cx="276.84" cy="463.17" r="1.45" fill="#111"/><circle cx="197.76" cy="480.22" r="1.45" fill="#111"/><circle cx="145.04" cy="514.33" r="1.45" fill="#111"/><circle cx="224.12" cy="514.33" r="1.45" fill="#111"/><circle cx="250.48" cy="514.33" r="1.45" fill="#111"/><circle cx="276.84" cy="514.33" r="1.45" fill="#111"/><circle cx="276.84" cy="531.38" r="1.45" fill="#111"/><circle cx="118.68" cy="548.42" r="1.45" fill="#111"/><circle cx="145.04" cy="548.42" r="1.45" fill="#111"/><circle cx="171.40" cy="548.42" r="1.45" fill="#111"/><circle cx="197.76" cy="548.42" r="1.45" fill="#111"/><circle cx="224.12" cy="548.42" r="1.45" fill="#111"/><circle cx="250.48" cy="548.42" r="1.45" fill="#111"/><circle cx="276.84" cy="548.42" r="1.45" fill="#111"/><circle cx="303.20" cy="548.42" r="1.45" fill="#111"/><circle cx="118.68" cy="565.48" r="1.45" fill="#111"/><circle cx="145.04" cy="565.48" r="1.45" fill="#111"/><circle cx="197.76" cy="565.48" r="1.45" fill="#111"/><circle cx="250.48" cy="565.48" r="1.45" fill="#111"/><circle cx="276.84" cy="565.48" r="1.45" fill="#111"/><rect x="355.20" y="310.00" width="273.60" height="93.50" fill="#d1d3d6"/><rect x="355.20" y="326.25" width="273.60" height="0.70" fill="#bdbdbd"/><rect x="355.20" y="335.05" width="273.60" height="0.70" fill="#9a9a9a"/><rect x="355.20" y="357.55" width="273.60" height="0.90" fill="#9a9a9a"/><rect x="355.20" y="380.15" width="273.60" height="0.70" fill="#9a9a9a"/><rect x="355.20" y="403.05" width="273.60" height="0.90" fill="#8a8a8a"/><rect x="355.20" y="309.55" width="273.60" height="0.90" fill="#808080"/><rect x="382.21" y="326.60" width="0.70" height="76.90" fill="#8f8f8f"/><rect x="409.57" y="326.60" width="0.70" height="76.90" fill="#8f8f8f"/><rect x="436.93" y="326.60" width="0.70" height="76.90" fill="#8f8f8f"/><rect x="464.29" y="326.60" width="0.70" height="76.90" fill="#8f8f8f"/><rect x="491.55" y="310.00" width="0.90" height="93.50" fill="#8a8a8a"/><rect x="519.01" y="326.60" width="0.70" height="76.90" fill="#8f8f8f"/><rect x="546.37" y="326.60" width="0.70" height="76.90" fill="#8f8f8f"/><rect x="573.73" y="326.60" width="0.70" height="76.90" fill="#8f8f8f"/><rect x="601.09" y="326.60" width="0.70" height="76.90" fill="#8f8f8f"/><text x="422.77" y="316.40" font-size="6.00" font-weight="bold" fill="#2a2a2a" textLength="1.67" lengthAdjust="spacingAndGlyphs"> </text><path d="M412.59 313.03a1.01 0.88 0 1 0 2.02 0a1.01 0.88 0 1 0 -2.02 0M415.71 311.97L415.71 314.44M413.01 314.89L415.96 314.89L415.96 315.64L413.01 315.64L413.01 316.38L415.96 316.38M418.11 312.15L418.11 313.92L420.13 313.92L420.13 312.15M418.11 312.95L420.13 312.95M420.99 311.97L420.99 314.44M420.99 313.16L421.95 313.16M418.53 314.89L418.53 316.38L421.48 316.38M427.28 312.42L425.17 312.42L425.17 315.94L427.28 315.94M425.17 314.18L427.28 314.18M428.80 311.97L428.80 316.38M427.62 314.09L428.80 314.09M430.82 312.15L430.82 313.92L432.84 313.92M433.94 311.97L433.94 314.44M431.24 315.64a1.48 0.75 0 1 0 2.95 0a1.48 0.75 0 1 0 -2.95 0" fill="none" stroke="#2a2a2a" stroke-width="0.75" stroke-linecap="square" stroke-linejoin="miter"/><text x="387.50" y="323.60" font-size="5.00" fill="#e2262d" textLength="1.35" lengthAdjust="spacingAndGlyphs">(</text><path d="M389.40 319.98L389.40 321.52L390.03 321.52L390.03 319.98M389.40 320.67L390.03 320.67M390.17 319.98L390.17 321.52L390.79 321.52L390.79 319.98M390.17 320.67L390.79 320.67M391.38 319.83L391.38 321.98M391.38 320.86L392.04 320.86M389.69 322.37L391.72 322.37L391.72 323.02L389.69 323.02L389.69 323.68L391.72 323.68M393.12 320.01L394.44 320.01L394.30 320.75L393.47 321.52M395.10 319.83L395.10 321.98M395.10 320.86L395.76 320.86M393.41 322.37L393.41 323.68L395.44 323.68M397.53 319.98L396.84 321.52M397.53 320.52L398.23 321.52M398.76 319.83L398.76 321.98M399.42 319.83L399.42 321.98M398.76 320.86L399.42 320.86M397.13 322.37L399.15 322.37L399.15 323.68" fill="none" stroke="#e2262d" stroke-width="0.45" stroke-linecap="square" stroke-linejoin="miter"/><text x="414.84" y="323.60" font-size="5.00" fill="#666" textLength="1.34" lengthAdjust="spacingAndGlyphs"> </text><text x="429.52" y="323.60" font-size="5.00" fill="#666" textLength="1.34" lengthAdjust="spacingAndGlyphs"> </text><text x="448.65" y="323.60" font-size="5.00" fill="#666" textLength="1.34" lengthAdjust="spacingAndGlyphs"> </text><text x="458.89" y="323.60" font-size="5.00" fill="#666" textLength="1.61" lengthAdjust="spacingAndGlyphs">)</text><path d="M402.46 319.80L404.98 319.80L404.98 321.56M401.92 321.98L405.52 321.98M403.00 321.98L403.00 323.49M404.44 321.98L404.44 323.49M406.55 319.99L408.19 319.99L408.02 320.74L406.98 321.52M409.56 319.80L409.56 321.98M408.60 320.52L409.56 320.52M408.60 321.18L409.56 321.18M406.91 322.37L409.43 322.37L409.43 323.70M411.54 320.38a1.08 0.58 0 1 0 2.16 0a1.08 0.58 0 1 0 -2.16 0M410.82 321.67L414.42 321.67M411.36 322.45L411.36 323.70L413.88 323.70M416.68 320.25L418.39 320.25L418.21 321.75L417.13 323.31M416.77 321.59L418.21 321.59M419.20 319.80L419.20 323.70M419.20 321.67L420.06 321.67M421.12 321.75a0.90 1.56 0 1 0 1.80 0a0.90 1.56 0 1 0 -1.80 0M423.86 319.80L423.86 323.70M426.04 319.80L426.04 321.56L428.56 321.56M427.30 321.77L427.30 322.84M425.50 322.84L429.10 322.84M431.36 320.25L433.07 320.25L432.89 321.75L431.81 323.31M431.45 321.59L432.89 321.59M434.46 319.80L434.46 323.70M433.45 321.67L434.46 321.67M437.64 319.96L435.92 319.96L435.92 321.52L437.64 321.52M435.92 320.74L437.64 320.74M438.58 319.80L438.58 321.98M436.28 323.04a1.26 0.66 0 1 0 2.52 0a1.26 0.66 0 1 0 -2.52 0M440.25 320.19L442.06 320.19L442.06 321.75L440.25 321.75L440.25 323.31L442.06 323.31M442.78 319.80L442.78 323.70M442.78 321.67L443.64 321.67M445.17 319.80L447.69 319.80L447.69 321.56M444.63 322.84L448.23 322.84M451.46 319.88L451.46 320.14M450.69 320.30L452.24 320.30M451.46 320.30L450.60 321.52M451.46 320.81L452.33 321.52M453.06 319.80L453.06 321.98M453.06 320.85L453.88 320.85M450.96 322.37L453.48 322.37L453.48 323.70L450.96 323.70L450.96 322.37M455.53 319.80L457.80 319.80M456.67 319.80L455.41 321.56M456.67 320.50L457.93 321.56M456.67 321.77L456.67 322.84M454.87 322.84L458.47 322.84" fill="none" stroke="#666" stroke-width="0.40" stroke-linecap="square" stroke-linejoin="miter"/><text x="561.98" y="320.60" font-size="5.60" fill="#3a3a3a" textLength="1.37" lengthAdjust="spacingAndGlyphs"> </text><path d="M549.41 316.25L551.91 316.25L551.91 318.25M550.66 318.49L550.66 319.71M548.88 319.71L552.45 319.71M553.47 318.47a0.89 1.77 0 1 0 1.79 0a0.89 1.77 0 1 0 -1.79 0M556.19 316.25L556.19 320.69M559.72 316.25L558.64 317.58M559.72 316.72L560.79 317.58M559.72 317.71L559.72 318.38M557.93 318.38L561.50 318.38M558.47 319.98a1.25 0.71 0 1 0 2.50 0a1.25 0.71 0 1 0 -2.50 0M565.68 316.69L563.89 316.69L563.89 320.24L565.68 320.24M563.89 318.47L565.68 318.47M566.97 316.25L566.97 320.69M565.97 318.38L566.97 318.38M568.53 316.43L568.53 318.20L570.24 318.20M571.17 316.25L571.17 318.73M568.89 319.93a1.25 0.75 0 1 0 2.50 0a1.25 0.75 0 1 0 -2.50 0" fill="none" stroke="#3a3a3a" stroke-width="0.50" stroke-linecap="square" stroke-linejoin="miter"/><text x="368.88" y="333.40" font-family='"Liberation Sans",sans-serif' font-size="5.80" font-weight="bold" fill="#1e1e1e" text-anchor="middle">H</text><text x="396.24" y="333.40" font-family='"Liberation Sans",sans-serif' font-size="5.80" font-weight="bold" fill="#1e1e1e" text-anchor="middle">K</text><text x="423.60" y="333.40" font-family='"Liberation Sans",sans-serif' font-size="5.80" font-weight="bold" fill="#1e1e1e" text-anchor="middle">XNMG</text><text x="450.96" y="333.40" font-family='"Liberation Sans",sans-serif' font-size="5.80" font-weight="bold" fill="#1e1e1e" text-anchor="middle">Y</text><text x="478.32" y="333.40" font-family='"Liberation Sans",sans-serif' font-size="5.80" font-weight="bold" fill="#1e1e1e" text-anchor="middle">BTVC</text><text x="505.68" y="333.40" font-family='"Liberation Sans",sans-serif' font-size="5.80" font-weight="bold" fill="#1e1e1e" text-anchor="middle">FCMX</text><text x="533.04" y="333.40" font-family='"Liberation Sans",sans-serif' font-size="5.80" font-weight="bold" fill="#1e1e1e" text-anchor="middle">TNMV</text><text x="560.40" y="333.40" font-family='"Liberation Sans",sans-serif' font-size="5.80" font-weight="bold" fill="#1e1e1e" text-anchor="middle">XNMV</text><text x="587.76" y="333.40" font-family='"Liberation Sans",sans-serif' font-size="5.80" font-weight="bold" fill="#1e1e1e" text-anchor="middle">ZNMV</text><text x="615.12" y="333.40" font-family='"Liberation Sans",sans-serif' font-size="5.80" font-weight="bold" fill="#1e1e1e" text-anchor="middle" textLength="23.50" lengthAdjust="spacingAndGlyphs">ZNMV F-BF</text><path d="M361.0 346.5L365.0 339.3L373.0 339.3L377.0 346.5L373.0 353.6L365.0 353.6Z" fill="#f6c415" stroke="#6b5410" stroke-width="0.75" stroke-linejoin="round"/><path d="M388.0 341.8L407.8 341.8L403.5 351.6L383.7 351.6Z" fill="#f6c415" stroke="#6b5410" stroke-width="0.75" stroke-linejoin="round"/><path d="M414.4 346.3L420.0 341.0L426.0 339.7L431.7 346.3L426.0 353.0L420.0 351.6Z" fill="#f6c415" stroke="#6b5410" stroke-width="0.75" stroke-linejoin="round"/><path d="M436.9 346.7L445.0 342.6L449.0 341.4L463.5 346.7L449.0 352.0L445.0 350.8Z" fill="#f6c415" stroke="#6b5410" stroke-width="0.75" stroke-linejoin="round"/><path d="M465.5 342.0L475.5 342.0L490.0 351.4L479.5 351.4Z" fill="#f6c415" stroke="#6b5410" stroke-width="0.75" stroke-linejoin="round"/><path d="M503 339.6Q510 339.6 512.8 344.5Q513.6 351 507 353.4Q500 354 498.8 347.5Q498.6 341.4 503 339.6Z" fill="#f6c415" stroke="#6b5410" stroke-width="0.75"/><path d="M532.4 340.3L539.0 352.6L525.8 352.6Z" fill="#f6c415" stroke="#6b5410" stroke-width="0.75" stroke-linejoin="round"/><path d="M551.0 346.1L555.0 342.0L559.4 339.7L567.8 346.1L563.5 350.5L559.4 352.6Z" fill="#f6c415" stroke="#6b5410" stroke-width="0.75" stroke-linejoin="round"/><path d="M576.0 346.7L587.0 341.8L598.0 346.7L587.0 351.6Z" fill="#f6c415" stroke="#6b5410" stroke-width="0.75" stroke-linejoin="round"/><path d="M603.6 346.7L613.8 341.8L624.0 346.7L613.8 351.6Z" fill="#f6c415" stroke="#6b5410" stroke-width="0.75" stroke-linejoin="round"/><text x="369.0" y="347.5" font-family='"Liberation Sans",sans-serif' font-size="2.8" fill="#6e5500" text-anchor="middle">120°</text><text x="396.0" y="347.7" font-family='"Liberation Sans",sans-serif' font-size="2.8" fill="#6e5500" text-anchor="middle">55°</text><text x="423.0" y="347.3" font-family='"Liberation Sans",sans-serif' font-size="2.8" fill="#6e5500" text-anchor="middle">75°</text><text x="450.0" y="347.7" font-family='"Liberation Sans",sans-serif' font-size="2.8" fill="#6e5500" text-anchor="middle">35°</text><text x="477.0" y="347.5" font-family='"Liberation Sans",sans-serif' font-size="2.8" fill="#6e5500" text-anchor="middle">35°</text><text x="505.5" y="347.5" font-family='"Liberation Sans",sans-serif' font-size="2.8" fill="#6e5500" text-anchor="middle">80°</text><text x="532.4" y="350.0" font-family='"Liberation Sans",sans-serif' font-size="2.8" fill="#6e5500" text-anchor="middle">60°</text><text x="559.4" y="347.1" font-family='"Liberation Sans",sans-serif' font-size="2.8" fill="#6e5500" text-anchor="middle">80°</text><text x="587.0" y="347.7" font-family='"Liberation Sans",sans-serif' font-size="2.8" fill="#6e5500" text-anchor="middle">80°</text><text x="613.8" y="347.7" font-family='"Liberation Sans",sans-serif' font-size="2.8" fill="#6e5500" text-anchor="middle">80°</text><text x="368.88" y="371.20" font-family='"Liberation Sans",sans-serif' font-size="5.30" fill="#3f3f3f" text-anchor="middle">05, 10</text><text x="396.24" y="371.20" font-family='"Liberation Sans",sans-serif' font-size="5.30" fill="#3f3f3f" text-anchor="middle">16</text><text x="423.60" y="371.20" font-family='"Liberation Sans",sans-serif' font-size="5.30" font-weight="bold" fill="#e2262d" text-anchor="middle">09, 11</text><text x="450.96" y="371.20" font-family='"Liberation Sans",sans-serif' font-size="5.30" font-weight="bold" fill="#e2262d" text-anchor="middle">13</text><text x="533.04" y="371.20" font-family='"Liberation Sans",sans-serif' font-size="5.30" fill="#3f3f3f" text-anchor="middle">21</text><text x="560.40" y="371.20" font-family='"Liberation Sans",sans-serif' font-size="5.30" fill="#3f3f3f" text-anchor="middle">11</text><text x="587.76" y="371.20" font-family='"Liberation Sans",sans-serif' font-size="5.30" fill="#3f3f3f" text-anchor="middle">14</text><text x="615.12" y="371.20" font-family='"Liberation Sans",sans-serif' font-size="5.30" fill="#3f3f3f" text-anchor="middle">14</text><text x="478.32" y="394.20" font-family='"Liberation Sans",sans-serif' font-size="5.30" fill="#3f3f3f" text-anchor="middle">11</text><text x="505.68" y="394.20" font-family='"Liberation Sans",sans-serif' font-size="5.30" fill="#3f3f3f" text-anchor="middle">10</text><rect x="355.20" y="420.20" width="273.60" height="0.70" fill="#b9b9b9"/><rect x="355.20" y="437.25" width="273.60" height="0.70" fill="#b9b9b9"/><rect x="355.20" y="454.30" width="273.60" height="0.70" fill="#b9b9b9"/><rect x="355.20" y="471.30" width="273.60" height="0.80" fill="#6a6a6a"/><rect x="355.20" y="488.40" width="273.60" height="0.70" fill="#b9b9b9"/><rect x="355.20" y="505.45" width="273.60" height="0.70" fill="#b9b9b9"/><rect x="355.20" y="522.50" width="273.60" height="0.70" fill="#b9b9b9"/><rect x="355.20" y="539.50" width="273.60" height="0.80" fill="#6a6a6a"/><rect x="355.20" y="556.60" width="273.60" height="0.70" fill="#b9b9b9"/><rect x="355.20" y="573.65" width="273.60" height="0.70" fill="#b9b9b9"/><rect x="354.80" y="403.50" width="0.80" height="167.50" fill="#8c8c8c"/><rect x="382.21" y="403.50" width="0.70" height="167.50" fill="#8c8c8c"/><rect x="409.57" y="403.50" width="0.70" height="167.50" fill="#b0b0b0"/><rect x="436.93" y="403.50" width="0.70" height="167.50" fill="#8c8c8c"/><rect x="464.29" y="403.50" width="0.70" height="167.50" fill="#8c8c8c"/><rect x="491.65" y="403.50" width="0.70" height="167.50" fill="#b0b0b0"/><rect x="519.01" y="403.50" width="0.70" height="167.50" fill="#8c8c8c"/><rect x="546.37" y="403.50" width="0.70" height="167.50" fill="#8c8c8c"/><rect x="573.73" y="403.50" width="0.70" height="167.50" fill="#b0b0b0"/><rect x="601.09" y="403.50" width="0.70" height="167.50" fill="#b0b0b0"/><rect x="628.40" y="403.50" width="0.80" height="167.50" fill="#8c8c8c"/><circle cx="478.32" cy="446.12" r="1.45" fill="#111"/><circle cx="505.68" cy="446.12" r="1.45" fill="#111"/><circle cx="560.40" cy="463.17" r="1.45" fill="#111"/><circle cx="560.40" cy="497.27" r="1.45" fill="#111"/><circle cx="368.88" cy="548.42" r="1.45" fill="#111"/><circle cx="533.04" cy="548.42" r="1.45" fill="#111"/><circle cx="560.40" cy="548.42" r="1.45" fill="#111"/><circle cx="587.76" cy="548.42" r="1.45" fill="#111"/><circle cx="615.12" cy="548.42" r="1.45" fill="#111"/><circle cx="368.88" cy="565.48" r="1.45" fill="#111"/><circle cx="560.40" cy="565.48" r="1.45" fill="#111"/></g><defs><filter id="sh" x="-10%" y="-40%" width="120%" height="180%"><feGaussianBlur in="SourceAlpha" stdDeviation="1.3"/><feOffset dy="0.8"/><feComponentTransfer><feFuncA type="linear" slope="0.28"/></feComponentTransfer><feMerge><feMergeNode/><feMergeNode in="SourceGraphic"/></feMerge></filter></defs><rect x="283.4" y="56.6" width="255.6" height="28.2" rx="6" fill="#ffffff" filter="url(#sh)"/><path d="M461 64.5V79.7" stroke="#e4e4e4" stroke-width="0.9"/><path d="M474 73.2L478.5 68.6L483 73.2M496.2 68.6L500.7 73.2L505.2 68.6M518.4 67.2L527.2 75.6M527.2 67.2L518.4 75.6" fill="none" stroke="#505050" stroke-width="1"/><rect x="2" y="567" width="678" height="2" fill="#f6f6f6"/><path d="M2 561V567H8Q3 567 3 561Z" fill="#f6f6f6"/><path d="M680 561V567H674Q679 567 679 561Z" fill="#f6f6f6"/><rect x="2" y="110" width="1" height="457" fill="#f2f4f6"/><rect x="1" y="2" width="680" height="1" fill="#1d1d1d"/><rect x="1" y="2" width="1" height="569" fill="#1d1d1d"/><rect x="680" y="2" width="1" height="569" fill="#1d1d1d"/><rect x="1" y="569" width="680" height="2" fill="#262626"/>
</svg></body></html>
